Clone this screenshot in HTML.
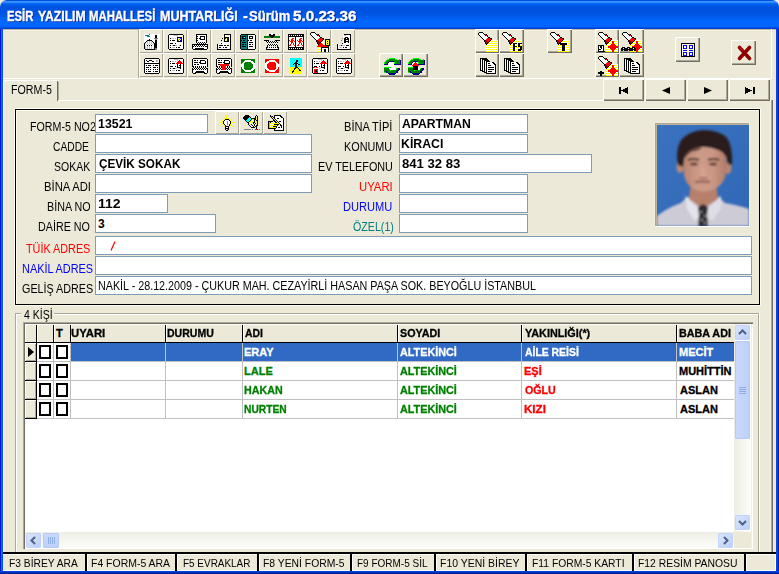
<!DOCTYPE html><html><head><meta charset="utf-8"><style>
html,body{margin:0;padding:0;}
body{width:779px;height:574px;position:relative;overflow:hidden;background:#ECE9D8;font-family:"Liberation Sans", sans-serif;font-size:11px;color:#000;}
svg text{font-family:"Liberation Sans", sans-serif;}
.inp{position:absolute;background:#fff;box-shadow:inset 0 0 0 1px #7F9DB9;}
</style></head><body>
<div style="position:absolute;left:0px;top:0px;width:779px;height:29px;background:linear-gradient(#0050DD 0px,#0050DD 1px,#3D95FF 1px,#3D95FF 2px,#2A86FF 2px,#2A86FF 3px,#0A6AF8 3px,#0A6AF8 4px,#0060EE 4px,#0060EE 5px,#0058E6 5px,#0058E6 6px,#0054E0 6px,#0054E0 7px,#0053DF 7px,#0053DF 8px,#0053DF 8px,#0053DF 9px,#0053DF 9px,#0053DF 10px,#0053DF 10px,#0053DF 11px,#0053DF 11px,#0053DF 12px,#0054E0 12px,#0054E0 13px,#0055E2 13px,#0055E2 14px,#0056E4 14px,#0056E4 15px,#0058E7 15px,#0058E7 16px,#005AEA 16px,#005AEA 17px,#005DEF 17px,#005DEF 18px,#0060F4 18px,#0060F4 19px,#0063F8 19px,#0063F8 20px,#0066FF 20px,#0066FF 21px,#0066FF 21px,#0066FF 22px,#0066FF 22px,#0066FF 23px,#0066FF 23px,#0066FF 24px,#0066FF 24px,#0066FF 25px,#0066FF 25px,#0066FF 26px,#0064FC 26px,#0064FC 27px,#0050E8 27px,#0050E8 28px,#0040D0 28px,#0040D0 29px);border-radius:7px 7px 0 0;"></div>
<div style="position:absolute;left:3px;top:29px;width:773px;height:1px;background:#BFB8A0"></div>
<div style="position:absolute;left:3px;top:30px;width:773px;height:1px;background:#F2EFE2"></div>
<div style="position:absolute;left:0px;top:29px;width:3px;height:545px;background:linear-gradient(90deg,#0019CF 0,#0019CF 1px,#166AEE 1px,#166AEE 2px,#0055EA 2px)"></div>
<div style="position:absolute;left:776px;top:29px;width:3px;height:545px;background:linear-gradient(90deg,#0844E6 0,#0844E6 1px,#0B41C8 1px,#0B41C8 2px,#001EA0 2px)"></div>
<div style="position:absolute;left:0px;top:571px;width:779px;height:3px;background:linear-gradient(#0044D8 0,#0044D8 1px,#0030BB 1px,#0030BB 2px,#001B9C 2px)"></div>
<div style="position:absolute;left:3px;top:78px;width:769px;height:1px;background:#fff"></div>
<div style="position:absolute;left:771px;top:29px;width:1px;height:50px;background:#fff"></div>
<div style="position:absolute;left:138px;top:29px;width:1px;height:49px;background:#ACA899"></div>
<div style="position:absolute;left:139px;top:29px;width:24px;height:24px;background:#ECE9D8;box-shadow:inset 1px 1px 0 #fff, inset -1px -1px 0 #ACA899;"><svg style="position:absolute;left:0px;top:0px" width="24" height="24" viewBox="0 0 24 24" shape-rendering="crispEdges"><path d="M5 5h5v1h-5zM11 5h10v1h-10zM5 6h1v1h-1zM10 6h6v1h-6zM18 6h3v1h-3zM5 7h3v1h-3zM11 7h5v1h-5zM18 7h3v1h-3zM5 8h11v1h-11zM18 8h3v1h-3zM5 9h10v1h-10zM19 9h2v1h-2zM5 10h5v1h-5zM11 10h5v1h-5zM18 10h3v1h-3zM5 11h3v1h-3zM13 11h3v1h-3zM18 11h3v1h-3zM5 12h2v1h-2zM9 12h1v1h-1zM11 12h1v1h-1zM14 12h2v1h-2zM18 12h3v1h-3zM5 13h1v1h-1zM7 13h1v1h-1zM9 13h1v1h-1zM11 13h1v1h-1zM13 13h1v1h-1zM15 13h1v1h-1zM18 13h3v1h-3zM7 14h1v1h-1zM9 14h1v1h-1zM11 14h1v1h-1zM13 14h1v1h-1zM18 14h3v1h-3zM6 15h1v1h-1zM8 15h1v1h-1zM10 15h1v1h-1zM12 15h1v1h-1zM14 15h1v1h-1zM18 15h3v1h-3zM6 16h2v1h-2zM9 16h1v1h-1zM11 16h1v1h-1zM13 16h2v1h-2zM18 16h3v1h-3zM7 17h1v1h-1zM9 17h1v1h-1zM11 17h1v1h-1zM13 17h2v1h-2zM18 17h3v1h-3zM7 18h1v1h-1zM9 18h1v1h-1zM11 18h1v1h-1zM13 18h2v1h-2zM18 18h3v1h-3zM7 19h1v1h-1zM9 19h1v1h-1zM11 19h1v1h-1zM13 19h2v1h-2zM18 19h3v1h-3zM5 20h1v1h-1zM18 20h3v1h-3z" fill="#fff"/><path d="M10 5h1v1h-1zM6 6h4v1h-4zM8 7h3v1h-3z" fill="#008080"/><path d="M16 6h2v1h-2zM16 7h2v1h-2zM16 8h2v1h-2zM10 10h1v1h-1zM8 11h5v1h-5zM16 11h2v1h-2zM7 12h1v1h-1zM13 12h1v1h-1zM16 12h2v1h-2zM6 13h1v1h-1zM14 13h1v1h-1zM16 13h2v1h-2zM5 14h1v1h-1zM15 14h3v1h-3zM5 15h1v1h-1zM15 15h3v1h-3zM5 16h1v1h-1zM8 16h1v1h-1zM10 16h1v1h-1zM12 16h1v1h-1zM15 16h3v1h-3zM5 17h1v1h-1zM15 17h3v1h-3zM5 18h1v1h-1zM15 18h3v1h-3zM5 19h1v1h-1zM15 19h1v1h-1zM6 20h10v1h-10z" fill="#000"/><path d="M15 9h4v1h-4zM16 10h2v1h-2zM16 19h2v1h-2zM16 20h2v1h-2z" fill="#808080"/><path d="M8 12h1v1h-1zM10 12h1v1h-1zM12 12h1v1h-1zM8 13h1v1h-1zM10 13h1v1h-1zM12 13h1v1h-1zM6 14h1v1h-1zM8 14h1v1h-1zM10 14h1v1h-1zM12 14h1v1h-1zM14 14h1v1h-1zM7 15h1v1h-1zM9 15h1v1h-1zM11 15h1v1h-1zM13 15h1v1h-1zM6 17h1v1h-1zM8 17h1v1h-1zM10 17h1v1h-1zM12 17h1v1h-1zM6 18h1v1h-1zM8 18h1v1h-1zM10 18h1v1h-1zM12 18h1v1h-1zM6 19h1v1h-1zM8 19h1v1h-1zM10 19h1v1h-1zM12 19h1v1h-1z" fill="#C0C0C0"/></svg></div>
<div style="position:absolute;left:163px;top:29px;width:24px;height:24px;background:#ECE9D8;box-shadow:inset 1px 1px 0 #fff, inset -1px -1px 0 #ACA899;"><svg style="position:absolute;left:0px;top:0px" width="24" height="24" viewBox="0 0 24 24" shape-rendering="crispEdges"><path d="M6 5h14v1h-14zM5 6h1v1h-1zM20 6h1v1h-1zM5 7h1v1h-1zM20 7h1v1h-1zM5 8h1v1h-1zM14 8h5v1h-5zM20 8h1v1h-1zM5 9h1v1h-1zM7 9h1v1h-1zM14 9h1v1h-1zM18 9h1v1h-1zM20 9h1v1h-1zM5 10h1v1h-1zM14 10h1v1h-1zM18 10h1v1h-1zM20 10h1v1h-1zM5 11h1v1h-1zM7 11h1v1h-1zM9 11h3v1h-3zM14 11h1v1h-1zM18 11h1v1h-1zM20 11h1v1h-1zM5 12h1v1h-1zM14 12h5v1h-5zM20 12h1v1h-1zM5 13h1v1h-1zM20 13h1v1h-1zM5 14h1v1h-1zM7 14h3v1h-3zM12 14h1v1h-1zM20 14h1v1h-1zM5 15h1v1h-1zM20 15h1v1h-1zM5 16h1v1h-1zM7 16h1v1h-1zM10 16h2v1h-2zM17 16h1v1h-1zM20 16h1v1h-1zM5 17h1v1h-1zM20 17h1v1h-1zM5 18h1v1h-1zM7 18h1v1h-1zM13 18h1v1h-1zM15 18h2v1h-2zM20 18h1v1h-1zM5 19h1v1h-1zM20 19h1v1h-1zM6 20h14v1h-14z" fill="#000"/><path d="M6 6h5v1h-5zM15 6h5v1h-5zM6 7h8v1h-8zM15 7h5v1h-5zM6 8h8v1h-8zM19 8h1v1h-1zM6 9h1v1h-1zM8 9h1v1h-1zM11 9h1v1h-1zM13 9h1v1h-1zM15 9h1v1h-1zM19 9h1v1h-1zM6 10h8v1h-8zM17 10h1v1h-1zM19 10h1v1h-1zM6 11h1v1h-1zM8 11h1v1h-1zM12 11h2v1h-2zM16 11h1v1h-1zM19 11h1v1h-1zM6 12h8v1h-8zM19 12h1v1h-1zM6 13h14v1h-14zM6 14h1v1h-1zM10 14h2v1h-2zM13 14h7v1h-7zM6 15h14v1h-14zM6 16h1v1h-1zM8 16h1v1h-1zM14 16h2v1h-2zM18 16h2v1h-2zM6 17h14v1h-14zM6 18h1v1h-1zM8 18h1v1h-1zM12 18h1v1h-1zM14 18h1v1h-1zM17 18h3v1h-3zM6 19h14v1h-14z" fill="#fff"/><path d="M11 6h4v1h-4zM14 7h1v1h-1zM9 9h2v1h-2zM12 9h1v1h-1zM9 16h1v1h-1zM12 16h2v1h-2zM16 16h1v1h-1zM9 18h3v1h-3z" fill="#C0C0C0"/><path d="M16 9h1v1h-1zM15 10h1v1h-1z" fill="#FFFF00"/><path d="M17 9h1v1h-1zM17 11h1v1h-1z" fill="#0000FF"/><path d="M16 10h1v1h-1zM15 11h1v1h-1z" fill="#808000"/></svg></div>
<div style="position:absolute;left:187px;top:29px;width:24px;height:24px;background:#ECE9D8;box-shadow:inset 1px 1px 0 #fff, inset -1px -1px 0 #ACA899;"><svg style="position:absolute;left:0px;top:0px" width="24" height="24" viewBox="0 0 24 24" shape-rendering="crispEdges"><path d="M9 5h11v1h-11zM9 6h1v1h-1zM19 6h1v1h-1zM9 7h2v1h-2zM13 7h5v1h-5zM19 7h1v1h-1zM9 8h1v1h-1zM13 8h1v1h-1zM17 8h1v1h-1zM19 8h1v1h-1zM9 9h2v1h-2zM12 9h2v1h-2zM17 9h1v1h-1zM19 9h1v1h-1zM9 10h1v1h-1zM13 10h5v1h-5zM19 10h1v1h-1zM9 11h2v1h-2zM19 11h1v1h-1zM9 12h1v1h-1zM19 12h1v1h-1zM9 13h1v1h-1zM11 13h1v1h-1zM13 13h1v1h-1zM15 13h1v1h-1zM17 13h1v1h-1zM19 13h1v1h-1zM10 14h1v1h-1zM12 14h1v1h-1zM14 14h1v1h-1zM16 14h1v1h-1zM18 14h1v1h-1zM5 15h16v1h-16zM5 16h1v1h-1zM7 16h1v1h-1zM9 16h1v1h-1zM11 16h1v1h-1zM13 16h1v1h-1zM15 16h1v1h-1zM17 16h1v1h-1zM20 16h1v1h-1zM5 17h2v1h-2zM8 17h1v1h-1zM10 17h1v1h-1zM12 17h1v1h-1zM14 17h1v1h-1zM16 17h1v1h-1zM18 17h3v1h-3zM5 18h1v1h-1zM20 18h1v1h-1zM5 19h1v1h-1zM8 19h9v1h-9zM20 19h1v1h-1zM6 20h14v1h-14z" fill="#000"/><path d="M10 6h9v1h-9zM11 7h2v1h-2zM18 7h1v1h-1zM10 8h3v1h-3zM14 8h3v1h-3zM18 8h1v1h-1zM11 9h1v1h-1zM14 9h3v1h-3zM18 9h1v1h-1zM10 10h3v1h-3zM18 10h1v1h-1zM11 11h8v1h-8zM10 12h9v1h-9zM10 13h1v1h-1zM12 13h1v1h-1zM14 13h1v1h-1zM16 13h1v1h-1zM18 13h1v1h-1zM11 14h1v1h-1zM13 14h1v1h-1zM15 14h1v1h-1zM17 14h1v1h-1zM6 16h1v1h-1zM8 16h1v1h-1zM10 16h1v1h-1zM12 16h1v1h-1zM14 16h1v1h-1zM16 16h1v1h-1zM18 16h2v1h-2zM7 17h1v1h-1zM9 17h1v1h-1zM11 17h1v1h-1zM13 17h1v1h-1zM15 17h1v1h-1zM17 17h1v1h-1zM6 18h14v1h-14zM6 19h2v1h-2zM17 19h3v1h-3z" fill="#fff"/></svg></div>
<div style="position:absolute;left:211px;top:29px;width:24px;height:24px;background:#ECE9D8;box-shadow:inset 1px 1px 0 #fff, inset -1px -1px 0 #ACA899;"><svg style="position:absolute;left:0px;top:0px" width="24" height="24" viewBox="0 0 24 24" shape-rendering="crispEdges"><path d="M13 5h7v1h-7zM13 6h1v1h-1zM19 6h1v1h-1zM13 7h1v1h-1zM19 7h1v1h-1zM13 8h5v1h-5zM19 8h1v1h-1zM11 9h1v1h-1zM13 9h1v1h-1zM17 9h1v1h-1zM19 9h1v1h-1zM13 10h1v1h-1zM17 10h1v1h-1zM19 10h1v1h-1zM10 11h1v1h-1zM13 11h1v1h-1zM17 11h1v1h-1zM19 11h1v1h-1zM13 12h5v1h-5zM19 12h1v1h-1zM19 13h1v1h-1zM10 14h1v1h-1zM19 14h1v1h-1zM6 15h1v1h-1zM19 15h1v1h-1zM6 16h1v1h-1zM8 16h4v1h-4zM13 16h2v1h-2zM16 16h2v1h-2zM19 16h1v1h-1zM6 17h1v1h-1zM19 17h1v1h-1zM6 18h1v1h-1zM8 18h2v1h-2zM12 18h1v1h-1zM14 18h2v1h-2zM19 18h1v1h-1zM6 19h1v1h-1zM19 19h1v1h-1zM6 20h14v1h-14z" fill="#000"/><path d="M14 6h5v1h-5zM12 7h1v1h-1zM14 7h5v1h-5zM18 8h1v1h-1zM18 9h1v1h-1zM15 10h1v1h-1zM18 10h1v1h-1zM14 11h1v1h-1zM18 11h1v1h-1zM18 12h1v1h-1zM9 13h10v1h-10zM11 14h8v1h-8zM7 15h12v1h-12zM7 16h1v1h-1zM12 16h1v1h-1zM15 16h1v1h-1zM18 16h1v1h-1zM7 17h12v1h-12zM7 18h1v1h-1zM10 18h2v1h-2zM13 18h1v1h-1zM16 18h3v1h-3zM7 19h12v1h-12z" fill="#fff"/><path d="M14 9h1v1h-1zM16 9h1v1h-1zM16 10h1v1h-1zM16 11h1v1h-1z" fill="#0000FF"/><path d="M15 9h1v1h-1zM14 10h1v1h-1zM15 11h1v1h-1z" fill="#FFFF00"/></svg></div>
<div style="position:absolute;left:235px;top:29px;width:24px;height:24px;background:#ECE9D8;box-shadow:inset 1px 1px 0 #fff, inset -1px -1px 0 #ACA899;"><svg style="position:absolute;left:0px;top:0px" width="24" height="24" viewBox="0 0 24 24" shape-rendering="crispEdges"><path d="M6 5h14v1h-14zM5 6h1v1h-1zM12 6h1v1h-1zM20 6h1v1h-1zM5 7h1v1h-1zM7 7h4v1h-4zM12 7h1v1h-1zM14 7h4v1h-4zM20 7h1v1h-1zM5 8h1v1h-1zM7 8h1v1h-1zM10 8h1v1h-1zM12 8h1v1h-1zM14 8h1v1h-1zM17 8h1v1h-1zM20 8h1v1h-1zM5 9h1v1h-1zM7 9h4v1h-4zM12 9h1v1h-1zM14 9h4v1h-4zM20 9h1v1h-1zM5 10h1v1h-1zM12 10h1v1h-1zM20 10h1v1h-1zM5 11h2v1h-2zM8 11h2v1h-2zM12 11h2v1h-2zM15 11h2v1h-2zM20 11h1v1h-1zM5 12h1v1h-1zM12 12h1v1h-1zM20 12h1v1h-1zM5 13h1v1h-1zM7 13h4v1h-4zM12 13h1v1h-1zM14 13h4v1h-4zM20 13h1v1h-1zM5 14h1v1h-1zM12 14h1v1h-1zM20 14h1v1h-1zM5 15h1v1h-1zM7 15h2v1h-2zM10 15h1v1h-1zM12 15h1v1h-1zM14 15h2v1h-2zM17 15h1v1h-1zM20 15h1v1h-1zM5 16h1v1h-1zM12 16h1v1h-1zM20 16h1v1h-1zM5 17h1v1h-1zM7 17h4v1h-4zM12 17h1v1h-1zM14 17h4v1h-4zM20 17h1v1h-1zM5 18h1v1h-1zM12 18h1v1h-1zM20 18h1v1h-1zM5 19h1v1h-1zM12 19h1v1h-1zM20 19h1v1h-1zM6 20h14v1h-14z" fill="#000"/><path d="M6 6h6v1h-6zM6 7h1v1h-1zM11 7h1v1h-1zM6 8h1v1h-1zM8 8h1v1h-1zM11 8h1v1h-1zM6 9h1v1h-1zM11 9h1v1h-1zM6 10h6v1h-6zM7 11h1v1h-1zM10 11h2v1h-2zM6 12h6v1h-6zM6 13h1v1h-1zM11 13h1v1h-1zM6 14h6v1h-6zM6 15h1v1h-1zM9 15h1v1h-1zM11 15h1v1h-1zM6 16h6v1h-6zM6 17h1v1h-1zM11 17h1v1h-1zM6 18h6v1h-6zM6 19h6v1h-6z" fill="#008080"/><path d="M13 6h7v1h-7zM13 7h1v1h-1zM18 7h2v1h-2zM13 8h1v1h-1zM15 8h2v1h-2zM18 8h2v1h-2zM13 9h1v1h-1zM18 9h2v1h-2zM13 10h7v1h-7zM14 11h1v1h-1zM17 11h3v1h-3zM13 12h7v1h-7zM13 13h1v1h-1zM18 13h2v1h-2zM13 14h7v1h-7zM13 15h1v1h-1zM16 15h1v1h-1zM18 15h2v1h-2zM13 16h7v1h-7zM13 17h1v1h-1zM18 17h2v1h-2zM13 18h7v1h-7zM13 19h7v1h-7z" fill="#fff"/><path d="M9 8h1v1h-1z" fill="#00FFFF"/></svg></div>
<div style="position:absolute;left:259px;top:29px;width:24px;height:24px;background:#ECE9D8;box-shadow:inset 1px 1px 0 #fff, inset -1px -1px 0 #ACA899;"><svg style="position:absolute;left:0px;top:0px" width="24" height="24" viewBox="0 0 24 24" shape-rendering="crispEdges"><path d="M10 5h2v1h-2zM14 5h2v1h-2zM10 6h6v1h-6zM11 7h4v1h-4zM12 8h2v1h-2zM5 11h5v1h-5zM16 11h5v1h-5zM7 12h1v1h-1zM9 12h1v1h-1zM11 12h1v1h-1zM13 12h1v1h-1zM15 12h1v1h-1zM17 12h1v1h-1zM8 13h1v1h-1zM10 13h1v1h-1zM12 13h1v1h-1zM14 13h1v1h-1zM16 13h1v1h-1zM18 13h1v1h-1zM9 15h1v1h-1zM11 15h1v1h-1zM13 15h1v1h-1zM15 15h1v1h-1zM17 15h1v1h-1zM8 16h1v1h-1zM10 16h1v1h-1zM12 16h1v1h-1zM14 16h1v1h-1zM16 16h1v1h-1zM18 16h1v1h-1zM8 17h1v1h-1zM18 17h1v1h-1zM7 18h2v1h-2zM10 18h1v1h-1zM12 18h1v1h-1zM14 18h1v1h-1zM16 18h1v1h-1zM18 18h2v1h-2zM7 19h1v1h-1zM19 19h1v1h-1zM7 20h13v1h-13z" fill="#000"/><path d="M12 5h2v1h-2zM8 12h1v1h-1zM10 12h1v1h-1zM12 12h1v1h-1zM14 12h1v1h-1zM16 12h1v1h-1zM18 12h1v1h-1zM10 15h1v1h-1zM12 15h1v1h-1zM14 15h1v1h-1zM16 15h1v1h-1zM9 16h1v1h-1zM11 16h1v1h-1zM13 16h1v1h-1zM15 16h1v1h-1zM17 16h1v1h-1zM9 18h1v1h-1zM11 18h1v1h-1zM13 18h1v1h-1zM15 18h1v1h-1zM17 18h1v1h-1zM8 19h11v1h-11z" fill="#fff"/><path d="M5 7h6v1h-6zM15 7h6v1h-6zM5 8h7v1h-7zM14 8h7v1h-7z" fill="#008000"/></svg></div>
<div style="position:absolute;left:283px;top:29px;width:24px;height:24px;background:#ECE9D8;box-shadow:inset 1px 1px 0 #fff, inset -1px -1px 0 #ACA899;"><svg style="position:absolute;left:0px;top:0px" width="24" height="24" viewBox="0 0 24 24" shape-rendering="crispEdges"><path d="M5 5h16v1h-16zM5 6h1v1h-1zM7 6h1v1h-1zM9 6h1v1h-1zM11 6h1v1h-1zM13 6h1v1h-1zM15 6h1v1h-1zM17 6h1v1h-1zM19 6h2v1h-2zM5 7h16v1h-16zM5 8h1v1h-1zM12 8h1v1h-1zM20 8h1v1h-1zM5 9h1v1h-1zM12 9h1v1h-1zM20 9h1v1h-1zM5 10h1v1h-1zM12 10h1v1h-1zM20 10h1v1h-1zM5 11h1v1h-1zM12 11h1v1h-1zM20 11h1v1h-1zM5 12h1v1h-1zM12 12h1v1h-1zM20 12h1v1h-1zM5 13h1v1h-1zM12 13h1v1h-1zM20 13h1v1h-1zM5 14h1v1h-1zM12 14h1v1h-1zM20 14h1v1h-1zM5 15h1v1h-1zM12 15h1v1h-1zM20 15h1v1h-1zM5 16h1v1h-1zM12 16h1v1h-1zM20 16h1v1h-1zM5 17h1v1h-1zM12 17h1v1h-1zM20 17h1v1h-1zM5 18h16v1h-16zM5 19h1v1h-1zM7 19h1v1h-1zM9 19h1v1h-1zM11 19h1v1h-1zM13 19h1v1h-1zM15 19h1v1h-1zM17 19h1v1h-1zM19 19h2v1h-2zM5 20h16v1h-16z" fill="#000"/><path d="M6 6h1v1h-1zM8 6h1v1h-1zM10 6h1v1h-1zM12 6h1v1h-1zM14 6h1v1h-1zM16 6h1v1h-1zM18 6h1v1h-1zM6 8h6v1h-6zM13 8h7v1h-7zM6 9h3v1h-3zM11 9h1v1h-1zM13 9h4v1h-4zM19 9h1v1h-1zM6 10h2v1h-2zM10 10h2v1h-2zM13 10h3v1h-3zM18 10h2v1h-2zM7 11h1v1h-1zM11 11h1v1h-1zM13 11h1v1h-1zM15 11h1v1h-1zM19 11h1v1h-1zM6 12h1v1h-1zM10 12h1v1h-1zM13 12h2v1h-2zM18 12h1v1h-1zM6 13h2v1h-2zM10 13h2v1h-2zM13 13h3v1h-3zM18 13h2v1h-2zM6 14h2v1h-2zM9 14h1v1h-1zM11 14h1v1h-1zM13 14h3v1h-3zM17 14h1v1h-1zM19 14h1v1h-1zM6 15h1v1h-1zM8 15h2v1h-2zM11 15h1v1h-1zM13 15h2v1h-2zM16 15h2v1h-2zM19 15h1v1h-1zM8 16h3v1h-3zM13 16h1v1h-1zM16 16h3v1h-3zM6 17h6v1h-6zM13 17h7v1h-7zM6 19h1v1h-1zM8 19h1v1h-1zM10 19h1v1h-1zM12 19h1v1h-1zM14 19h1v1h-1zM16 19h1v1h-1zM18 19h1v1h-1z" fill="#fff"/><path d="M9 9h2v1h-2zM17 9h2v1h-2zM8 10h2v1h-2zM16 10h2v1h-2zM6 11h1v1h-1zM8 11h3v1h-3zM14 11h1v1h-1zM16 11h3v1h-3zM7 12h3v1h-3zM11 12h1v1h-1zM15 12h3v1h-3zM19 12h1v1h-1zM8 13h2v1h-2zM16 13h2v1h-2zM8 14h1v1h-1zM10 14h1v1h-1zM16 14h1v1h-1zM18 14h1v1h-1zM7 15h1v1h-1zM10 15h1v1h-1zM15 15h1v1h-1zM18 15h1v1h-1zM6 16h2v1h-2zM11 16h1v1h-1zM14 16h2v1h-2zM19 16h1v1h-1z" fill="#FF0000"/></svg></div>
<div style="position:absolute;left:307px;top:29px;width:24px;height:24px;background:#ECE9D8;box-shadow:inset 1px 1px 0 #fff, inset -1px -1px 0 #ACA899;"><svg style="position:absolute;left:0px;top:0px" width="24" height="24" viewBox="0 0 24 24" shape-rendering="crispEdges"><path d="M4 3h4v1h-4zM3 4h1v1h-1zM8 4h1v1h-1zM3 5h1v1h-1zM9 5h1v1h-1zM11 5h1v1h-1zM4 6h1v1h-1zM10 6h1v1h-1zM12 6h1v1h-1zM5 7h1v1h-1zM12 7h1v1h-1zM6 8h1v1h-1zM13 8h2v1h-2zM7 9h1v1h-1zM15 9h2v1h-2zM8 10h1v1h-1zM16 10h1v1h-1zM18 10h5v1h-5zM9 11h1v1h-1zM15 11h1v1h-1zM18 11h1v1h-1zM22 11h1v1h-1zM9 12h1v1h-1zM14 12h1v1h-1zM18 12h1v1h-1zM20 12h1v1h-1zM22 12h1v1h-1zM10 13h1v1h-1zM13 13h1v1h-1zM18 13h1v1h-1zM22 13h1v1h-1zM10 14h1v1h-1zM12 14h1v1h-1zM18 14h1v1h-1zM20 14h1v1h-1zM22 14h1v1h-1zM11 15h1v1h-1zM18 15h1v1h-1zM22 15h1v1h-1zM18 16h5v1h-5zM21 17h1v1h-1zM14 18h8v1h-8zM14 19h1v1h-1zM21 19h1v1h-1zM14 20h1v1h-1zM17 20h2v1h-2zM21 20h1v1h-1zM14 21h1v1h-1zM17 21h2v1h-2zM21 21h1v1h-1zM14 22h1v1h-1zM17 22h2v1h-2zM21 22h1v1h-1z" fill="#000"/><path d="M4 4h4v1h-4zM4 5h5v1h-5zM5 6h5v1h-5zM6 7h6v1h-6zM7 8h6v1h-6zM8 9h4v1h-4zM9 10h2v1h-2zM14 13h1v1h-1zM12 18h1v1h-1zM11 19h3v1h-3zM15 19h6v1h-6zM12 20h1v1h-1zM15 20h2v1h-2zM19 20h2v1h-2zM11 21h3v1h-3zM15 21h2v1h-2zM19 21h2v1h-2zM12 22h1v1h-1zM15 22h2v1h-2zM19 22h2v1h-2z" fill="#fff"/><path d="M10 5h1v1h-1zM11 6h1v1h-1zM12 9h3v1h-3zM11 10h5v1h-5zM11 11h4v1h-4zM12 12h2v1h-2zM13 14h2v1h-2zM12 15h4v1h-4zM11 16h7v1h-7zM10 17h11v1h-11z" fill="#FF0000"/><path d="M10 11h1v1h-1zM10 12h2v1h-2zM11 13h2v1h-2zM11 14h1v1h-1z" fill="#800000"/><path d="M19 11h3v1h-3zM19 12h1v1h-1zM21 12h1v1h-1zM19 13h3v1h-3zM19 14h1v1h-1zM21 14h1v1h-1zM19 15h3v1h-3zM11 18h1v1h-1zM13 18h1v1h-1zM11 20h1v1h-1zM13 20h1v1h-1zM11 22h1v1h-1zM13 22h1v1h-1z" fill="#FFFF00"/></svg></div>
<div style="position:absolute;left:331px;top:29px;width:24px;height:24px;background:#ECE9D8;box-shadow:inset 1px 1px 0 #fff, inset -1px -1px 0 #ACA899;"><svg style="position:absolute;left:0px;top:0px" width="24" height="24" viewBox="0 0 24 24" shape-rendering="crispEdges"><path d="M13 5h7v1h-7zM19 6h1v1h-1zM19 7h1v1h-1zM14 8h3v1h-3zM19 8h1v1h-1zM13 9h2v1h-2zM16 9h2v1h-2zM19 9h1v1h-1zM13 10h5v1h-5zM19 10h1v1h-1zM13 11h2v1h-2zM17 11h1v1h-1zM19 11h1v1h-1zM13 12h5v1h-5zM19 12h1v1h-1zM13 13h2v1h-2zM17 13h1v1h-1zM19 13h1v1h-1zM11 14h1v1h-1zM19 14h1v1h-1zM6 15h1v1h-1zM19 15h1v1h-1zM6 16h1v1h-1zM10 16h1v1h-1zM15 16h3v1h-3zM19 16h1v1h-1zM6 17h1v1h-1zM19 17h1v1h-1zM6 18h1v1h-1zM12 18h1v1h-1zM14 18h2v1h-2zM19 18h1v1h-1zM6 19h1v1h-1zM19 19h1v1h-1zM6 20h14v1h-14z" fill="#000"/><path d="M12 6h1v1h-1zM15 6h4v1h-4zM12 7h7v1h-7zM12 8h2v1h-2zM17 8h2v1h-2zM12 9h1v1h-1zM15 9h1v1h-1zM18 9h1v1h-1zM12 10h1v1h-1zM18 10h1v1h-1zM12 11h1v1h-1zM15 11h2v1h-2zM18 11h1v1h-1zM12 12h1v1h-1zM18 12h1v1h-1zM12 13h1v1h-1zM15 13h2v1h-2zM18 13h1v1h-1zM12 14h7v1h-7zM7 15h12v1h-12zM7 16h1v1h-1zM14 16h1v1h-1zM18 16h1v1h-1zM7 17h12v1h-12zM7 18h1v1h-1zM11 18h1v1h-1zM13 18h1v1h-1zM16 18h3v1h-3zM7 19h12v1h-12z" fill="#fff"/><path d="M13 6h2v1h-2zM8 16h2v1h-2zM11 16h3v1h-3zM8 18h3v1h-3z" fill="#C0C0C0"/><path d="M11 9h1v1h-1zM10 11h1v1h-1z" fill="#808080"/></svg></div>
<div style="position:absolute;left:139px;top:53px;width:24px;height:24px;background:#ECE9D8;box-shadow:inset 1px 1px 0 #fff, inset -1px -1px 0 #ACA899;"><svg style="position:absolute;left:0px;top:0px" width="24" height="24" viewBox="0 0 24 24" shape-rendering="crispEdges"><path d="M6 5h14v1h-14zM5 6h1v1h-1zM20 6h1v1h-1zM5 7h1v1h-1zM7 7h1v1h-1zM10 7h3v1h-3zM20 7h1v1h-1zM5 8h1v1h-1zM8 8h2v1h-2zM13 8h2v1h-2zM20 8h1v1h-1zM5 9h1v1h-1zM20 9h1v1h-1zM5 10h16v1h-16zM5 11h1v1h-1zM20 11h1v1h-1zM5 12h1v1h-1zM7 12h1v1h-1zM9 12h3v1h-3zM14 12h1v1h-1zM16 12h3v1h-3zM20 12h1v1h-1zM5 13h1v1h-1zM20 13h1v1h-1zM5 14h1v1h-1zM7 14h3v1h-3zM11 14h1v1h-1zM14 14h3v1h-3zM18 14h1v1h-1zM20 14h1v1h-1zM5 15h1v1h-1zM20 15h1v1h-1zM5 16h1v1h-1zM7 16h1v1h-1zM9 16h1v1h-1zM11 16h1v1h-1zM14 16h1v1h-1zM16 16h1v1h-1zM18 16h1v1h-1zM20 16h1v1h-1zM5 17h1v1h-1zM20 17h1v1h-1zM5 18h1v1h-1zM7 18h1v1h-1zM9 18h3v1h-3zM14 18h1v1h-1zM16 18h3v1h-3zM20 18h1v1h-1zM5 19h1v1h-1zM20 19h1v1h-1zM6 20h14v1h-14z" fill="#000"/><path d="M6 6h14v1h-14zM6 7h1v1h-1zM8 7h2v1h-2zM13 7h4v1h-4zM19 7h1v1h-1zM6 8h2v1h-2zM10 8h3v1h-3zM15 8h2v1h-2zM19 8h1v1h-1zM6 9h14v1h-14zM6 11h14v1h-14zM6 12h1v1h-1zM8 12h1v1h-1zM12 12h2v1h-2zM15 12h1v1h-1zM19 12h1v1h-1zM6 13h14v1h-14zM6 14h1v1h-1zM10 14h1v1h-1zM12 14h2v1h-2zM17 14h1v1h-1zM19 14h1v1h-1zM6 15h14v1h-14zM6 16h1v1h-1zM8 16h1v1h-1zM10 16h1v1h-1zM12 16h2v1h-2zM15 16h1v1h-1zM17 16h1v1h-1zM19 16h1v1h-1zM6 17h14v1h-14zM6 18h1v1h-1zM8 18h1v1h-1zM12 18h2v1h-2zM15 18h1v1h-1zM19 18h1v1h-1zM6 19h14v1h-14z" fill="#fff"/><path d="M17 7h1v1h-1z" fill="#808080"/><path d="M18 7h1v1h-1zM17 8h2v1h-2z" fill="#C0C0C0"/></svg></div>
<div style="position:absolute;left:163px;top:53px;width:24px;height:24px;background:#ECE9D8;box-shadow:inset 1px 1px 0 #fff, inset -1px -1px 0 #ACA899;"><svg style="position:absolute;left:0px;top:0px" width="24" height="24" viewBox="0 0 24 24" shape-rendering="crispEdges"><path d="M6 5h14v1h-14zM5 6h1v1h-1zM20 6h1v1h-1zM5 7h1v1h-1zM20 7h1v1h-1zM5 8h1v1h-1zM7 8h1v1h-1zM20 8h1v1h-1zM5 9h1v1h-1zM20 9h1v1h-1zM5 10h1v1h-1zM7 10h1v1h-1zM9 10h3v1h-3zM20 10h1v1h-1zM5 11h1v1h-1zM14 11h1v1h-1zM17 11h1v1h-1zM20 11h1v1h-1zM5 12h1v1h-1zM14 12h1v1h-1zM16 12h2v1h-2zM20 12h1v1h-1zM5 13h1v1h-1zM7 13h3v1h-3zM12 13h1v1h-1zM14 13h1v1h-1zM17 13h1v1h-1zM20 13h1v1h-1zM5 14h1v1h-1zM14 14h4v1h-4zM20 14h1v1h-1zM5 15h1v1h-1zM7 15h1v1h-1zM10 15h2v1h-2zM17 15h1v1h-1zM20 15h1v1h-1zM5 16h1v1h-1zM20 16h1v1h-1zM5 17h1v1h-1zM7 17h1v1h-1zM13 17h1v1h-1zM15 17h2v1h-2zM20 17h1v1h-1zM5 18h1v1h-1zM20 18h1v1h-1zM5 19h1v1h-1zM20 19h1v1h-1zM6 20h14v1h-14z" fill="#000"/><path d="M6 6h5v1h-5zM15 6h5v1h-5zM6 7h8v1h-8zM15 7h1v1h-1zM17 7h3v1h-3zM6 8h1v1h-1zM8 8h1v1h-1zM11 8h1v1h-1zM13 8h2v1h-2zM18 8h2v1h-2zM6 9h8v1h-8zM19 9h1v1h-1zM6 10h1v1h-1zM8 10h1v1h-1zM12 10h1v1h-1zM6 11h8v1h-8zM15 11h2v1h-2zM18 11h2v1h-2zM6 12h8v1h-8zM15 12h1v1h-1zM18 12h2v1h-2zM6 13h1v1h-1zM10 13h2v1h-2zM13 13h1v1h-1zM15 13h2v1h-2zM18 13h2v1h-2zM6 14h8v1h-8zM18 14h2v1h-2zM6 15h1v1h-1zM8 15h1v1h-1zM14 15h2v1h-2zM18 15h2v1h-2zM6 16h14v1h-14zM6 17h1v1h-1zM8 17h1v1h-1zM12 17h1v1h-1zM14 17h1v1h-1zM17 17h3v1h-3zM6 18h14v1h-14zM6 19h14v1h-14z" fill="#fff"/><path d="M11 6h4v1h-4zM14 7h1v1h-1zM9 8h2v1h-2zM12 8h1v1h-1zM9 15h1v1h-1zM12 15h2v1h-2zM16 15h1v1h-1zM9 17h3v1h-3z" fill="#C0C0C0"/><path d="M16 7h1v1h-1zM15 8h3v1h-3zM14 9h5v1h-5zM13 10h7v1h-7z" fill="#FF0000"/></svg></div>
<div style="position:absolute;left:187px;top:53px;width:24px;height:24px;background:#ECE9D8;box-shadow:inset 1px 1px 0 #fff, inset -1px -1px 0 #ACA899;"><svg style="position:absolute;left:0px;top:0px" width="24" height="24" viewBox="0 0 24 24" shape-rendering="crispEdges"><path d="M6 5h14v1h-14zM5 6h1v1h-1zM20 6h1v1h-1zM5 7h1v1h-1zM7 7h2v1h-2zM10 7h1v1h-1zM13 7h5v1h-5zM20 7h1v1h-1zM5 8h1v1h-1zM13 8h1v1h-1zM18 8h1v1h-1zM20 8h1v1h-1zM5 9h1v1h-1zM7 9h4v1h-4zM12 9h2v1h-2zM18 9h1v1h-1zM20 9h1v1h-1zM5 10h1v1h-1zM13 10h6v1h-6zM20 10h1v1h-1zM5 11h1v1h-1zM7 11h2v1h-2zM10 11h2v1h-2zM20 11h1v1h-1zM5 12h1v1h-1zM20 12h1v1h-1zM5 13h2v1h-2zM8 13h1v1h-1zM10 13h1v1h-1zM12 13h1v1h-1zM14 13h1v1h-1zM16 13h1v1h-1zM18 13h1v1h-1zM20 13h1v1h-1zM6 14h1v1h-1zM8 14h1v1h-1zM10 14h1v1h-1zM12 14h1v1h-1zM14 14h1v1h-1zM16 14h1v1h-1zM18 14h1v1h-1zM5 15h1v1h-1zM7 15h1v1h-1zM9 15h1v1h-1zM11 15h1v1h-1zM13 15h1v1h-1zM15 15h1v1h-1zM17 15h1v1h-1zM19 15h2v1h-2zM5 16h2v1h-2zM8 16h1v1h-1zM10 16h1v1h-1zM12 16h1v1h-1zM14 16h1v1h-1zM16 16h1v1h-1zM18 16h1v1h-1zM20 16h1v1h-1zM5 17h1v1h-1zM20 17h1v1h-1zM5 18h1v1h-1zM9 18h8v1h-8zM20 18h1v1h-1zM5 19h1v1h-1zM8 19h10v1h-10zM20 19h1v1h-1zM6 20h3v1h-3zM17 20h3v1h-3z" fill="#000"/><path d="M6 6h14v1h-14zM6 7h1v1h-1zM9 7h1v1h-1zM11 7h2v1h-2zM18 7h2v1h-2zM6 8h7v1h-7zM14 8h4v1h-4zM19 8h1v1h-1zM6 9h1v1h-1zM11 9h1v1h-1zM14 9h4v1h-4zM19 9h1v1h-1zM6 10h7v1h-7zM19 10h1v1h-1zM6 11h1v1h-1zM9 11h1v1h-1zM12 11h8v1h-8zM6 12h14v1h-14zM7 13h1v1h-1zM9 13h1v1h-1zM11 13h1v1h-1zM13 13h1v1h-1zM15 13h1v1h-1zM17 13h1v1h-1zM19 13h1v1h-1zM6 15h1v1h-1zM8 15h1v1h-1zM10 15h1v1h-1zM12 15h1v1h-1zM14 15h1v1h-1zM16 15h1v1h-1zM18 15h1v1h-1zM7 16h1v1h-1zM9 16h1v1h-1zM11 16h1v1h-1zM13 16h1v1h-1zM15 16h1v1h-1zM17 16h1v1h-1zM19 16h1v1h-1zM6 17h14v1h-14zM6 18h3v1h-3zM17 18h3v1h-3zM6 19h2v1h-2zM18 19h2v1h-2z" fill="#fff"/></svg></div>
<div style="position:absolute;left:211px;top:53px;width:24px;height:24px;background:#ECE9D8;box-shadow:inset 1px 1px 0 #fff, inset -1px -1px 0 #ACA899;"><svg style="position:absolute;left:0px;top:0px" width="24" height="24" viewBox="0 0 24 24" shape-rendering="crispEdges"><path d="M6 5h14v1h-14zM5 6h1v1h-1zM20 6h1v1h-1zM5 7h1v1h-1zM7 7h2v1h-2zM10 7h1v1h-1zM13 7h5v1h-5zM20 7h1v1h-1zM5 8h1v1h-1zM13 8h1v1h-1zM18 8h1v1h-1zM20 8h1v1h-1zM5 9h1v1h-1zM7 9h4v1h-4zM12 9h2v1h-2zM18 9h1v1h-1zM20 9h1v1h-1zM5 10h1v1h-1zM13 10h6v1h-6zM20 10h1v1h-1zM5 11h1v1h-1zM7 11h2v1h-2zM20 11h1v1h-1zM5 12h1v1h-1zM20 12h1v1h-1zM5 13h2v1h-2zM8 13h1v1h-1zM10 13h1v1h-1zM16 13h1v1h-1zM18 13h1v1h-1zM20 13h1v1h-1zM6 14h1v1h-1zM8 14h1v1h-1zM10 14h1v1h-1zM16 14h1v1h-1zM18 14h1v1h-1zM5 15h1v1h-1zM7 15h1v1h-1zM9 15h1v1h-1zM15 15h1v1h-1zM17 15h1v1h-1zM19 15h2v1h-2zM5 16h2v1h-2zM8 16h1v1h-1zM10 16h1v1h-1zM16 16h1v1h-1zM18 16h1v1h-1zM20 16h1v1h-1zM5 17h1v1h-1zM20 17h1v1h-1zM5 18h1v1h-1zM9 18h8v1h-8zM20 18h1v1h-1zM5 19h1v1h-1zM8 19h10v1h-10zM20 19h1v1h-1zM6 20h3v1h-3zM17 20h3v1h-3z" fill="#000"/><path d="M6 6h14v1h-14zM6 7h1v1h-1zM9 7h1v1h-1zM11 7h2v1h-2zM18 7h2v1h-2zM6 8h7v1h-7zM14 8h4v1h-4zM19 8h1v1h-1zM6 9h1v1h-1zM11 9h1v1h-1zM14 9h4v1h-4zM19 9h1v1h-1zM6 10h7v1h-7zM19 10h1v1h-1zM6 11h1v1h-1zM18 11h2v1h-2zM6 12h3v1h-3zM18 12h2v1h-2zM7 13h1v1h-1zM9 13h1v1h-1zM15 13h1v1h-1zM17 13h1v1h-1zM19 13h1v1h-1zM6 15h1v1h-1zM8 15h1v1h-1zM10 15h1v1h-1zM16 15h1v1h-1zM18 15h1v1h-1zM7 16h1v1h-1zM9 16h1v1h-1zM15 16h1v1h-1zM17 16h1v1h-1zM19 16h1v1h-1zM6 17h14v1h-14zM6 18h3v1h-3zM17 18h3v1h-3zM6 19h2v1h-2zM18 19h2v1h-2z" fill="#fff"/><path d="M9 11h9v1h-9zM9 12h9v1h-9zM11 13h4v1h-4zM11 14h4v1h-4zM11 15h4v1h-4zM11 16h4v1h-4z" fill="#FF0000"/></svg></div>
<div style="position:absolute;left:235px;top:53px;width:24px;height:24px;background:#ECE9D8;box-shadow:inset 1px 1px 0 #fff, inset -1px -1px 0 #ACA899;"><svg style="position:absolute;left:0px;top:0px" width="24" height="24" viewBox="0 0 24 24" shape-rendering="crispEdges"><path d="M6 6h14v1h-14zM6 7h4v1h-4zM16 7h4v1h-4zM6 8h3v1h-3zM18 8h2v1h-2zM6 9h2v1h-2zM10 9h6v1h-6zM19 9h1v1h-1zM6 10h1v1h-1zM9 10h8v1h-8zM9 11h9v1h-9zM9 12h9v1h-9zM9 13h9v1h-9zM6 14h1v1h-1zM9 14h9v1h-9zM6 15h1v1h-1zM9 15h8v1h-8zM6 16h2v1h-2zM10 16h6v1h-6zM19 16h1v1h-1zM6 17h3v1h-3zM18 17h2v1h-2zM6 18h4v1h-4zM16 18h4v1h-4zM6 19h14v1h-14z" fill="#008000"/><path d="M10 7h6v1h-6zM9 8h9v1h-9zM8 9h2v1h-2zM16 9h3v1h-3zM7 10h2v1h-2zM17 10h3v1h-3zM6 11h3v1h-3zM18 11h2v1h-2zM6 12h3v1h-3zM18 12h2v1h-2zM6 13h3v1h-3zM18 13h2v1h-2zM7 14h2v1h-2zM18 14h2v1h-2zM7 15h2v1h-2zM17 15h3v1h-3zM8 16h2v1h-2zM16 16h3v1h-3zM9 17h9v1h-9zM10 18h6v1h-6z" fill="#fff"/></svg></div>
<div style="position:absolute;left:259px;top:53px;width:24px;height:24px;background:#ECE9D8;box-shadow:inset 1px 1px 0 #fff, inset -1px -1px 0 #ACA899;"><svg style="position:absolute;left:0px;top:0px" width="24" height="24" viewBox="0 0 24 24" shape-rendering="crispEdges"><path d="M6 6h14v1h-14zM6 7h4v1h-4zM16 7h4v1h-4zM6 8h2v1h-2zM17 8h3v1h-3zM6 9h1v1h-1zM10 9h6v1h-6zM18 9h2v1h-2zM9 10h8v1h-8zM19 10h1v1h-1zM8 11h9v1h-9zM8 12h9v1h-9zM8 13h9v1h-9zM8 14h9v1h-9zM19 14h1v1h-1zM9 15h8v1h-8zM19 15h1v1h-1zM6 16h1v1h-1zM10 16h6v1h-6zM18 16h2v1h-2zM6 17h2v1h-2zM17 17h3v1h-3zM6 18h4v1h-4zM16 18h4v1h-4zM6 19h14v1h-14z" fill="#FF0000"/><path d="M10 7h6v1h-6zM8 8h9v1h-9zM7 9h3v1h-3zM16 9h2v1h-2zM6 10h3v1h-3zM17 10h2v1h-2zM6 11h2v1h-2zM17 11h3v1h-3zM6 12h2v1h-2zM17 12h3v1h-3zM6 13h2v1h-2zM17 13h3v1h-3zM6 14h2v1h-2zM17 14h2v1h-2zM6 15h3v1h-3zM17 15h2v1h-2zM7 16h3v1h-3zM16 16h2v1h-2zM8 17h9v1h-9zM10 18h6v1h-6z" fill="#fff"/></svg></div>
<div style="position:absolute;left:283px;top:53px;width:24px;height:24px;background:#ECE9D8;box-shadow:inset 1px 1px 0 #fff, inset -1px -1px 0 #ACA899;"><svg style="position:absolute;left:0px;top:0px" width="24" height="24" viewBox="0 0 24 24" shape-rendering="crispEdges"><path d="M7 5h12v1h-12zM7 6h12v1h-12zM7 7h6v1h-6zM15 7h4v1h-4zM7 8h6v1h-6zM15 8h4v1h-4zM7 9h5v1h-5zM14 9h5v1h-5zM7 10h4v1h-4zM15 10h4v1h-4zM7 11h3v1h-3zM11 11h1v1h-1zM17 11h2v1h-2zM7 12h5v1h-5zM14 12h5v1h-5zM7 13h5v1h-5zM14 13h5v1h-5z" fill="#00FFFF"/><path d="M13 7h2v1h-2zM13 8h2v1h-2zM12 9h2v1h-2zM11 10h4v1h-4zM10 11h1v1h-1zM12 11h2v1h-2zM15 11h2v1h-2zM12 12h2v1h-2zM12 13h2v1h-2zM12 14h3v1h-3zM11 15h2v1h-2zM15 15h1v1h-1zM11 16h1v1h-1zM16 16h1v1h-1zM10 17h1v1h-1zM16 17h2v1h-2zM9 18h2v1h-2zM9 19h1v1h-1z" fill="#000"/><path d="M14 11h1v1h-1z" fill="#fff"/><path d="M7 14h5v1h-5zM15 14h4v1h-4zM7 15h4v1h-4zM13 15h2v1h-2zM16 15h3v1h-3zM7 16h4v1h-4zM12 16h4v1h-4zM17 16h2v1h-2zM7 17h3v1h-3zM11 17h5v1h-5zM18 17h1v1h-1zM7 18h2v1h-2zM11 18h8v1h-8zM7 19h2v1h-2zM10 19h9v1h-9zM7 20h12v1h-12z" fill="#FFFF00"/></svg></div>
<div style="position:absolute;left:307px;top:53px;width:24px;height:24px;background:#ECE9D8;box-shadow:inset 1px 1px 0 #fff, inset -1px -1px 0 #ACA899;"><svg style="position:absolute;left:0px;top:0px" width="24" height="24" viewBox="0 0 24 24" shape-rendering="crispEdges"><path d="M6 5h14v1h-14zM5 6h1v1h-1zM20 6h1v1h-1zM5 7h1v1h-1zM20 7h1v1h-1zM5 8h1v1h-1zM7 8h1v1h-1zM20 8h1v1h-1zM5 9h1v1h-1zM20 9h1v1h-1zM5 10h1v1h-1zM7 10h1v1h-1zM9 10h3v1h-3zM20 10h1v1h-1zM5 11h1v1h-1zM14 11h1v1h-1zM17 11h1v1h-1zM20 11h1v1h-1zM5 12h1v1h-1zM14 12h1v1h-1zM16 12h2v1h-2zM20 12h1v1h-1zM5 13h1v1h-1zM7 13h3v1h-3zM12 13h1v1h-1zM14 13h1v1h-1zM17 13h1v1h-1zM20 13h1v1h-1zM5 14h1v1h-1zM14 14h4v1h-4zM20 14h1v1h-1zM5 15h1v1h-1zM17 15h1v1h-1zM20 15h1v1h-1zM5 16h1v1h-1zM20 16h1v1h-1zM5 17h1v1h-1zM8 17h2v1h-2zM13 17h1v1h-1zM15 17h2v1h-2zM20 17h1v1h-1zM5 18h1v1h-1zM8 18h2v1h-2zM20 18h1v1h-1zM5 19h1v1h-1zM20 19h1v1h-1zM6 20h14v1h-14z" fill="#000"/><path d="M6 6h5v1h-5zM15 6h5v1h-5zM6 7h8v1h-8zM15 7h1v1h-1zM17 7h3v1h-3zM6 8h1v1h-1zM8 8h1v1h-1zM11 8h1v1h-1zM13 8h2v1h-2zM18 8h2v1h-2zM6 9h8v1h-8zM19 9h1v1h-1zM6 10h1v1h-1zM8 10h1v1h-1zM12 10h1v1h-1zM6 11h8v1h-8zM15 11h2v1h-2zM18 11h2v1h-2zM6 12h8v1h-8zM15 12h1v1h-1zM18 12h2v1h-2zM6 13h1v1h-1zM10 13h2v1h-2zM13 13h1v1h-1zM15 13h2v1h-2zM18 13h2v1h-2zM8 14h1v1h-1zM11 14h3v1h-3zM18 14h2v1h-2zM6 15h6v1h-6zM14 15h2v1h-2zM18 15h2v1h-2zM6 16h1v1h-1zM11 16h9v1h-9zM6 17h1v1h-1zM11 17h2v1h-2zM14 17h1v1h-1zM17 17h3v1h-3zM6 18h1v1h-1zM11 18h9v1h-9zM6 19h1v1h-1zM11 19h9v1h-9z" fill="#fff"/><path d="M11 6h4v1h-4zM14 7h1v1h-1zM9 8h2v1h-2zM12 8h1v1h-1zM12 15h2v1h-2zM16 15h1v1h-1z" fill="#C0C0C0"/><path d="M16 7h1v1h-1zM15 8h3v1h-3zM14 9h5v1h-5zM13 10h7v1h-7zM6 14h2v1h-2zM9 14h2v1h-2zM7 16h4v1h-4zM7 17h1v1h-1zM10 17h1v1h-1zM7 18h1v1h-1zM10 18h1v1h-1zM7 19h4v1h-4z" fill="#FF0000"/></svg></div>
<div style="position:absolute;left:331px;top:53px;width:24px;height:24px;background:#ECE9D8;box-shadow:inset 1px 1px 0 #fff, inset -1px -1px 0 #ACA899;"><svg style="position:absolute;left:0px;top:0px" width="24" height="24" viewBox="0 0 24 24" shape-rendering="crispEdges"><path d="M6 5h14v1h-14zM5 6h1v1h-1zM20 6h1v1h-1zM5 7h1v1h-1zM20 7h1v1h-1zM5 8h1v1h-1zM7 8h1v1h-1zM20 8h1v1h-1zM5 9h1v1h-1zM20 9h1v1h-1zM5 10h1v1h-1zM7 10h1v1h-1zM9 10h3v1h-3zM20 10h1v1h-1zM5 11h1v1h-1zM14 11h1v1h-1zM17 11h1v1h-1zM20 11h1v1h-1zM5 12h1v1h-1zM14 12h1v1h-1zM16 12h2v1h-2zM20 12h1v1h-1zM5 13h1v1h-1zM7 13h3v1h-3zM12 13h1v1h-1zM14 13h1v1h-1zM17 13h1v1h-1zM20 13h1v1h-1zM5 14h1v1h-1zM14 14h4v1h-4zM20 14h1v1h-1zM5 15h1v1h-1zM7 15h1v1h-1zM10 15h2v1h-2zM17 15h1v1h-1zM20 15h1v1h-1zM5 16h1v1h-1zM20 16h1v1h-1zM5 17h1v1h-1zM7 17h1v1h-1zM13 17h1v1h-1zM15 17h2v1h-2zM20 17h1v1h-1zM5 18h1v1h-1zM20 18h1v1h-1zM5 19h1v1h-1zM20 19h1v1h-1zM6 20h14v1h-14z" fill="#000"/><path d="M6 6h5v1h-5zM15 6h5v1h-5zM6 7h8v1h-8zM15 7h1v1h-1zM17 7h3v1h-3zM6 8h1v1h-1zM8 8h1v1h-1zM11 8h1v1h-1zM13 8h2v1h-2zM18 8h2v1h-2zM6 9h8v1h-8zM19 9h1v1h-1zM6 10h1v1h-1zM8 10h1v1h-1zM12 10h1v1h-1zM6 11h8v1h-8zM15 11h2v1h-2zM18 11h2v1h-2zM6 12h8v1h-8zM15 12h1v1h-1zM18 12h2v1h-2zM6 13h1v1h-1zM10 13h2v1h-2zM13 13h1v1h-1zM15 13h2v1h-2zM18 13h2v1h-2zM6 14h8v1h-8zM18 14h2v1h-2zM6 15h1v1h-1zM8 15h1v1h-1zM14 15h2v1h-2zM18 15h2v1h-2zM6 16h14v1h-14zM6 17h1v1h-1zM8 17h1v1h-1zM12 17h1v1h-1zM14 17h1v1h-1zM17 17h3v1h-3zM6 18h14v1h-14zM6 19h14v1h-14z" fill="#fff"/><path d="M11 6h4v1h-4zM14 7h1v1h-1zM9 8h2v1h-2zM12 8h1v1h-1zM9 15h1v1h-1zM12 15h2v1h-2zM16 15h1v1h-1zM9 17h3v1h-3z" fill="#C0C0C0"/><path d="M16 7h1v1h-1zM15 8h3v1h-3zM14 9h5v1h-5zM13 10h7v1h-7z" fill="#FF0000"/></svg></div>
<div style="position:absolute;left:379px;top:53px;width:24px;height:24px;background:#ECE9D8;box-shadow:inset 1px 1px 0 #fff, inset -1px -1px 0 #716F64, inset -2px -2px 0 #ACA899;"><svg style="position:absolute;left:0px;top:0px" width="24" height="24" viewBox="0 0 24 24" shape-rendering="crispEdges"><path d="M10 5h6v1h-6zM8 6h2v1h-2zM16 6h2v1h-2zM20 6h1v1h-1zM7 7h1v1h-1zM6 8h1v1h-1zM5 9h1v1h-1zM15 9h1v1h-1zM5 10h1v1h-1zM15 10h1v1h-1zM5 14h7v1h-7zM17 15h1v1h-1zM10 16h1v1h-1zM11 17h1v1h-1zM5 19h2v1h-2z" fill="#00FF00"/><path d="M10 6h6v1h-6zM8 7h13v1h-13zM7 8h3v1h-3zM15 8h6v1h-6zM6 9h3v1h-3zM16 9h5v1h-5zM6 10h2v1h-2zM16 10h5v1h-5zM5 15h5v1h-5zM18 15h1v1h-1zM5 16h5v1h-5zM17 16h2v1h-2zM5 17h6v1h-6zM12 17h6v1h-6zM5 18h2v1h-2zM8 18h9v1h-9zM9 19h8v1h-8z" fill="#008000"/><path d="M21 7h1v1h-1zM10 8h5v1h-5zM21 8h1v1h-1zM9 9h1v1h-1zM21 9h1v1h-1zM8 10h1v1h-1zM21 10h1v1h-1zM5 11h4v1h-4zM15 11h7v1h-7zM19 15h2v1h-2zM19 16h2v1h-2zM18 17h2v1h-2zM7 18h1v1h-1zM17 18h2v1h-2zM7 19h2v1h-2zM17 19h2v1h-2zM9 20h8v1h-8zM10 21h6v1h-6z" fill="#000080"/><path d="M10 9h5v1h-5zM9 10h6v1h-6zM9 11h6v1h-6zM9 12h6v1h-6zM11 13h4v1h-4zM12 14h4v1h-4zM10 15h7v1h-7zM11 16h6v1h-6z" fill="#fff"/></svg></div>
<div style="position:absolute;left:403px;top:53px;width:25px;height:24px;background:#ECE9D8;box-shadow:inset 1px 1px 0 #fff, inset -1px -1px 0 #716F64, inset -2px -2px 0 #ACA899;"><svg style="position:absolute;left:0px;top:0px" width="24" height="24" viewBox="0 0 24 24" shape-rendering="crispEdges"><path d="M10 5h6v1h-6zM8 6h2v1h-2zM16 6h2v1h-2zM20 6h1v1h-1zM7 7h1v1h-1zM6 8h1v1h-1zM5 9h1v1h-1zM15 9h1v1h-1zM5 10h1v1h-1zM15 10h1v1h-1zM5 14h5v1h-5zM17 15h1v1h-1zM11 17h1v1h-1zM5 19h2v1h-2z" fill="#00FF00"/><path d="M10 6h6v1h-6zM8 7h13v1h-13zM7 8h3v1h-3zM15 8h6v1h-6zM6 9h3v1h-3zM16 9h5v1h-5zM6 10h2v1h-2zM16 10h5v1h-5zM5 15h5v1h-5zM18 15h1v1h-1zM5 16h5v1h-5zM17 16h2v1h-2zM5 17h6v1h-6zM12 17h6v1h-6zM5 18h2v1h-2zM8 18h9v1h-9zM9 19h8v1h-8z" fill="#008000"/><path d="M21 7h1v1h-1zM10 8h5v1h-5zM21 8h1v1h-1zM9 9h1v1h-1zM21 9h1v1h-1zM8 10h1v1h-1zM21 10h1v1h-1zM5 11h4v1h-4zM15 11h7v1h-7zM19 15h2v1h-2zM19 16h2v1h-2zM18 17h2v1h-2zM7 18h1v1h-1zM17 18h2v1h-2zM7 19h2v1h-2zM17 19h2v1h-2zM9 20h8v1h-8zM10 21h6v1h-6z" fill="#000080"/><path d="M10 9h2v1h-2zM13 9h2v1h-2zM9 10h2v1h-2zM14 10h1v1h-1zM9 11h1v1h-1zM15 14h1v1h-1zM15 15h2v1h-2zM15 16h2v1h-2z" fill="#fff"/><path d="M12 9h1v1h-1zM11 10h3v1h-3zM10 11h5v1h-5zM9 12h7v1h-7z" fill="#FF0000"/><path d="M10 13h5v1h-5zM10 14h5v1h-5zM10 15h5v1h-5zM10 16h5v1h-5z" fill="#000"/></svg></div>
<div style="position:absolute;left:475px;top:29px;width:24px;height:24px;background:#ECE9D8;box-shadow:inset 1px 1px 0 #fff, inset -1px -1px 0 #716F64, inset -2px -2px 0 #ACA899;"><svg style="position:absolute;left:0px;top:0px" width="24" height="24" viewBox="0 0 24 24" shape-rendering="crispEdges"><path d="M4 3h4v1h-4zM3 4h1v1h-1zM8 4h1v1h-1zM3 5h1v1h-1zM9 5h1v1h-1zM11 5h1v1h-1zM4 6h1v1h-1zM10 6h1v1h-1zM12 6h1v1h-1zM5 7h1v1h-1zM12 7h1v1h-1zM6 8h1v1h-1zM13 8h2v1h-2zM7 9h1v1h-1zM15 9h2v1h-2zM8 10h1v1h-1zM16 10h1v1h-1zM9 11h1v1h-1zM15 11h1v1h-1zM9 12h1v1h-1zM14 12h1v1h-1zM10 13h1v1h-1zM13 13h1v1h-1zM10 14h1v1h-1zM12 14h1v1h-1zM11 15h1v1h-1z" fill="#000"/><path d="M4 4h4v1h-4zM4 5h5v1h-5zM5 6h5v1h-5zM6 7h6v1h-6zM7 8h6v1h-6zM8 9h4v1h-4zM9 10h2v1h-2zM16 11h7v1h-7zM16 12h1v1h-1zM18 12h1v1h-1zM20 12h1v1h-1zM22 12h1v1h-1zM14 13h9v1h-9zM14 14h1v1h-1zM16 14h1v1h-1zM18 14h1v1h-1zM20 14h1v1h-1zM22 14h1v1h-1zM12 15h11v1h-11zM12 16h1v1h-1zM14 16h1v1h-1zM16 16h1v1h-1zM18 16h1v1h-1zM20 16h1v1h-1zM22 16h1v1h-1zM11 17h12v1h-12zM12 18h1v1h-1zM14 18h1v1h-1zM16 18h1v1h-1zM18 18h1v1h-1zM20 18h1v1h-1zM22 18h1v1h-1zM11 19h12v1h-12zM12 20h1v1h-1zM14 20h1v1h-1zM16 20h1v1h-1zM18 20h1v1h-1zM20 20h1v1h-1zM22 20h1v1h-1zM11 21h12v1h-12zM12 22h1v1h-1zM14 22h1v1h-1zM16 22h1v1h-1zM18 22h1v1h-1zM20 22h1v1h-1zM22 22h1v1h-1z" fill="#fff"/><path d="M10 5h1v1h-1zM11 6h1v1h-1zM12 9h3v1h-3zM11 10h5v1h-5zM11 11h4v1h-4zM12 12h2v1h-2z" fill="#FF0000"/><path d="M10 11h1v1h-1zM10 12h2v1h-2zM11 13h2v1h-2zM11 14h1v1h-1z" fill="#800000"/><path d="M15 12h1v1h-1zM17 12h1v1h-1zM19 12h1v1h-1zM21 12h1v1h-1zM13 14h1v1h-1zM15 14h1v1h-1zM17 14h1v1h-1zM19 14h1v1h-1zM21 14h1v1h-1zM11 16h1v1h-1zM13 16h1v1h-1zM15 16h1v1h-1zM17 16h1v1h-1zM19 16h1v1h-1zM21 16h1v1h-1zM11 18h1v1h-1zM13 18h1v1h-1zM15 18h1v1h-1zM17 18h1v1h-1zM19 18h1v1h-1zM21 18h1v1h-1zM11 20h1v1h-1zM13 20h1v1h-1zM15 20h1v1h-1zM17 20h1v1h-1zM19 20h1v1h-1zM21 20h1v1h-1zM11 22h1v1h-1zM13 22h1v1h-1zM15 22h1v1h-1zM17 22h1v1h-1zM19 22h1v1h-1zM21 22h1v1h-1z" fill="#FFFF00"/></svg></div>
<div style="position:absolute;left:499px;top:29px;width:25px;height:24px;background:#ECE9D8;box-shadow:inset 1px 1px 0 #fff, inset -1px -1px 0 #716F64, inset -2px -2px 0 #ACA899;"><svg style="position:absolute;left:0px;top:0px" width="24" height="24" viewBox="0 0 24 24" shape-rendering="crispEdges"><path d="M4 3h4v1h-4zM3 4h1v1h-1zM8 4h1v1h-1zM3 5h1v1h-1zM9 5h1v1h-1zM11 5h1v1h-1zM4 6h1v1h-1zM10 6h1v1h-1zM12 6h1v1h-1zM5 7h1v1h-1zM12 7h1v1h-1zM6 8h1v1h-1zM13 8h2v1h-2zM7 9h1v1h-1zM15 9h2v1h-2zM8 10h1v1h-1zM16 10h1v1h-1zM9 11h1v1h-1zM15 11h1v1h-1zM9 12h1v1h-1zM14 12h1v1h-1zM10 13h1v1h-1zM13 13h1v1h-1zM10 14h1v1h-1zM12 14h1v1h-1zM14 14h4v1h-4zM19 14h4v1h-4zM11 15h1v1h-1zM14 15h2v1h-2zM19 15h2v1h-2zM14 16h2v1h-2zM19 16h2v1h-2zM14 17h4v1h-4zM19 17h4v1h-4zM14 18h2v1h-2zM21 18h2v1h-2zM14 19h2v1h-2zM21 19h2v1h-2zM14 20h2v1h-2zM19 20h4v1h-4zM14 21h2v1h-2zM19 21h3v1h-3z" fill="#000"/><path d="M4 4h4v1h-4zM4 5h5v1h-5zM5 6h5v1h-5zM6 7h6v1h-6zM7 8h6v1h-6zM8 9h4v1h-4zM9 10h2v1h-2zM16 11h7v1h-7zM16 12h1v1h-1zM18 12h1v1h-1zM20 12h1v1h-1zM22 12h1v1h-1zM14 13h9v1h-9zM18 14h1v1h-1zM12 15h2v1h-2zM16 15h3v1h-3zM21 15h2v1h-2zM12 16h1v1h-1zM16 16h1v1h-1zM18 16h1v1h-1zM22 16h1v1h-1zM11 17h3v1h-3zM18 17h1v1h-1zM12 18h1v1h-1zM16 18h1v1h-1zM18 18h1v1h-1zM20 18h1v1h-1zM11 19h3v1h-3zM16 19h5v1h-5zM12 20h1v1h-1zM16 20h1v1h-1zM18 20h1v1h-1zM11 21h3v1h-3zM16 21h3v1h-3zM22 21h1v1h-1zM12 22h1v1h-1zM14 22h1v1h-1zM16 22h1v1h-1zM18 22h1v1h-1zM20 22h1v1h-1zM22 22h1v1h-1z" fill="#fff"/><path d="M10 5h1v1h-1zM11 6h1v1h-1zM12 9h3v1h-3zM11 10h5v1h-5zM11 11h4v1h-4zM12 12h2v1h-2z" fill="#FF0000"/><path d="M10 11h1v1h-1zM10 12h2v1h-2zM11 13h2v1h-2zM11 14h1v1h-1z" fill="#800000"/><path d="M15 12h1v1h-1zM17 12h1v1h-1zM19 12h1v1h-1zM21 12h1v1h-1zM13 14h1v1h-1zM11 16h1v1h-1zM13 16h1v1h-1zM17 16h1v1h-1zM21 16h1v1h-1zM11 18h1v1h-1zM13 18h1v1h-1zM17 18h1v1h-1zM19 18h1v1h-1zM11 20h1v1h-1zM13 20h1v1h-1zM17 20h1v1h-1zM11 22h1v1h-1zM13 22h1v1h-1zM15 22h1v1h-1zM17 22h1v1h-1zM19 22h1v1h-1zM21 22h1v1h-1z" fill="#FFFF00"/></svg></div>
<div style="position:absolute;left:475px;top:53px;width:24px;height:24px;background:#ECE9D8;box-shadow:inset 1px 1px 0 #fff, inset -1px -1px 0 #716F64, inset -2px -2px 0 #ACA899;"><svg style="position:absolute;left:0px;top:0px" width="24" height="24" viewBox="0 0 24 24" shape-rendering="crispEdges"><path d="M5 5h7v1h-7zM5 6h1v1h-1zM7 6h6v1h-6zM5 7h1v1h-1zM7 7h1v1h-1zM9 7h5v1h-5zM5 8h1v1h-1zM7 8h1v1h-1zM9 8h1v1h-1zM11 8h4v1h-4zM5 9h1v1h-1zM7 9h1v1h-1zM9 9h1v1h-1zM11 9h1v1h-1zM17 9h2v1h-2zM5 10h1v1h-1zM7 10h1v1h-1zM9 10h1v1h-1zM11 10h1v1h-1zM13 10h2v1h-2zM18 10h2v1h-2zM5 11h1v1h-1zM7 11h1v1h-1zM9 11h1v1h-1zM11 11h1v1h-1zM19 11h2v1h-2zM5 12h1v1h-1zM7 12h1v1h-1zM9 12h1v1h-1zM11 12h1v1h-1zM13 12h3v1h-3zM20 12h1v1h-1zM5 13h1v1h-1zM7 13h1v1h-1zM9 13h1v1h-1zM11 13h1v1h-1zM20 13h1v1h-1zM5 14h1v1h-1zM7 14h1v1h-1zM9 14h1v1h-1zM11 14h1v1h-1zM13 14h6v1h-6zM20 14h1v1h-1zM5 15h1v1h-1zM7 15h1v1h-1zM9 15h1v1h-1zM11 15h1v1h-1zM20 15h1v1h-1zM5 16h1v1h-1zM7 16h1v1h-1zM9 16h1v1h-1zM11 16h1v1h-1zM13 16h6v1h-6zM20 16h1v1h-1zM5 17h3v1h-3zM9 17h1v1h-1zM11 17h1v1h-1zM20 17h1v1h-1zM7 18h3v1h-3zM11 18h1v1h-1zM13 18h4v1h-4zM20 18h1v1h-1zM9 19h3v1h-3zM20 19h1v1h-1zM11 20h10v1h-10z" fill="#000"/><path d="M6 6h1v1h-1zM6 7h1v1h-1zM8 7h1v1h-1zM6 8h1v1h-1zM8 8h1v1h-1zM10 8h1v1h-1zM6 9h1v1h-1zM8 9h1v1h-1zM10 9h1v1h-1zM12 9h5v1h-5zM6 10h1v1h-1zM8 10h1v1h-1zM10 10h1v1h-1zM12 10h1v1h-1zM15 10h3v1h-3zM6 11h1v1h-1zM8 11h1v1h-1zM10 11h1v1h-1zM12 11h7v1h-7zM6 12h1v1h-1zM8 12h1v1h-1zM10 12h1v1h-1zM12 12h1v1h-1zM16 12h4v1h-4zM6 13h1v1h-1zM8 13h1v1h-1zM10 13h1v1h-1zM12 13h8v1h-8zM6 14h1v1h-1zM8 14h1v1h-1zM10 14h1v1h-1zM12 14h1v1h-1zM19 14h1v1h-1zM6 15h1v1h-1zM8 15h1v1h-1zM10 15h1v1h-1zM12 15h8v1h-8zM6 16h1v1h-1zM8 16h1v1h-1zM10 16h1v1h-1zM12 16h1v1h-1zM19 16h1v1h-1zM8 17h1v1h-1zM10 17h1v1h-1zM12 17h8v1h-8zM10 18h1v1h-1zM12 18h1v1h-1zM17 18h3v1h-3zM12 19h8v1h-8z" fill="#fff"/></svg></div>
<div style="position:absolute;left:499px;top:53px;width:25px;height:24px;background:#ECE9D8;box-shadow:inset 1px 1px 0 #fff, inset -1px -1px 0 #716F64, inset -2px -2px 0 #ACA899;"><svg style="position:absolute;left:0px;top:0px" width="24" height="24" viewBox="0 0 24 24" shape-rendering="crispEdges"><path d="M5 5h7v1h-7zM5 6h1v1h-1zM7 6h6v1h-6zM5 7h1v1h-1zM7 7h1v1h-1zM9 7h5v1h-5zM5 8h1v1h-1zM7 8h1v1h-1zM9 8h1v1h-1zM11 8h4v1h-4zM5 9h1v1h-1zM7 9h1v1h-1zM9 9h1v1h-1zM11 9h1v1h-1zM17 9h2v1h-2zM5 10h1v1h-1zM7 10h1v1h-1zM9 10h1v1h-1zM11 10h1v1h-1zM13 10h2v1h-2zM18 10h2v1h-2zM5 11h1v1h-1zM7 11h1v1h-1zM9 11h1v1h-1zM11 11h1v1h-1zM19 11h2v1h-2zM5 12h1v1h-1zM7 12h1v1h-1zM9 12h1v1h-1zM11 12h1v1h-1zM13 12h3v1h-3zM20 12h1v1h-1zM5 13h1v1h-1zM7 13h1v1h-1zM9 13h1v1h-1zM11 13h1v1h-1zM20 13h1v1h-1zM5 14h1v1h-1zM7 14h1v1h-1zM9 14h1v1h-1zM11 14h1v1h-1zM13 14h6v1h-6zM20 14h1v1h-1zM5 15h1v1h-1zM7 15h1v1h-1zM9 15h1v1h-1zM11 15h1v1h-1zM20 15h1v1h-1zM5 16h1v1h-1zM7 16h1v1h-1zM9 16h1v1h-1zM11 16h1v1h-1zM13 16h6v1h-6zM20 16h1v1h-1zM5 17h3v1h-3zM9 17h1v1h-1zM11 17h1v1h-1zM20 17h1v1h-1zM7 18h3v1h-3zM11 18h1v1h-1zM13 18h4v1h-4zM20 18h1v1h-1zM9 19h3v1h-3zM20 19h1v1h-1zM11 20h10v1h-10z" fill="#000"/><path d="M6 6h1v1h-1zM6 7h1v1h-1zM8 7h1v1h-1zM6 8h1v1h-1zM8 8h1v1h-1zM10 8h1v1h-1zM6 9h1v1h-1zM8 9h1v1h-1zM10 9h1v1h-1zM12 9h5v1h-5zM6 10h1v1h-1zM8 10h1v1h-1zM10 10h1v1h-1zM12 10h1v1h-1zM15 10h3v1h-3zM6 11h1v1h-1zM8 11h1v1h-1zM10 11h1v1h-1zM12 11h7v1h-7zM6 12h1v1h-1zM8 12h1v1h-1zM10 12h1v1h-1zM12 12h1v1h-1zM16 12h4v1h-4zM6 13h1v1h-1zM8 13h1v1h-1zM10 13h1v1h-1zM12 13h8v1h-8zM6 14h1v1h-1zM8 14h1v1h-1zM10 14h1v1h-1zM12 14h1v1h-1zM19 14h1v1h-1zM6 15h1v1h-1zM8 15h1v1h-1zM10 15h1v1h-1zM12 15h8v1h-8zM6 16h1v1h-1zM8 16h1v1h-1zM10 16h1v1h-1zM12 16h1v1h-1zM19 16h1v1h-1zM8 17h1v1h-1zM10 17h1v1h-1zM12 17h8v1h-8zM10 18h1v1h-1zM12 18h1v1h-1zM17 18h3v1h-3zM12 19h8v1h-8z" fill="#fff"/></svg></div>
<div style="position:absolute;left:547px;top:29px;width:25px;height:24px;background:#ECE9D8;box-shadow:inset 1px 1px 0 #fff, inset -1px -1px 0 #716F64, inset -2px -2px 0 #ACA899;"><svg style="position:absolute;left:0px;top:0px" width="24" height="24" viewBox="0 0 24 24" shape-rendering="crispEdges"><path d="M4 3h4v1h-4zM3 4h1v1h-1zM8 4h1v1h-1zM3 5h1v1h-1zM9 5h1v1h-1zM11 5h1v1h-1zM4 6h1v1h-1zM10 6h1v1h-1zM12 6h1v1h-1zM5 7h1v1h-1zM12 7h1v1h-1zM6 8h1v1h-1zM13 8h2v1h-2zM7 9h1v1h-1zM15 9h2v1h-2zM8 10h1v1h-1zM16 10h1v1h-1zM9 11h1v1h-1zM15 11h1v1h-1zM9 12h1v1h-1zM14 12h1v1h-1zM10 13h1v1h-1zM13 13h1v1h-1zM10 14h1v1h-1zM12 14h8v1h-8zM11 15h1v1h-1zM13 15h7v1h-7zM15 16h3v1h-3zM15 17h3v1h-3zM15 18h3v1h-3zM15 19h3v1h-3zM15 20h3v1h-3zM15 21h3v1h-3z" fill="#000"/><path d="M4 4h4v1h-4zM4 5h5v1h-5zM5 6h5v1h-5zM6 7h6v1h-6zM7 8h6v1h-6zM8 9h4v1h-4zM9 10h2v1h-2zM16 11h6v1h-6zM16 12h1v1h-1zM18 12h1v1h-1zM20 12h1v1h-1zM14 13h8v1h-8zM20 14h1v1h-1zM12 15h1v1h-1zM20 15h2v1h-2zM12 16h1v1h-1zM14 16h1v1h-1zM18 16h1v1h-1zM20 16h1v1h-1zM11 17h4v1h-4zM18 17h4v1h-4zM12 18h1v1h-1zM14 18h1v1h-1zM18 18h1v1h-1zM20 18h1v1h-1zM11 19h4v1h-4zM18 19h4v1h-4zM12 20h1v1h-1zM14 20h1v1h-1zM18 20h1v1h-1zM20 20h1v1h-1zM11 21h4v1h-4zM18 21h4v1h-4zM12 22h1v1h-1zM14 22h1v1h-1zM16 22h1v1h-1zM18 22h1v1h-1zM20 22h1v1h-1z" fill="#fff"/><path d="M10 5h1v1h-1zM11 6h1v1h-1zM12 9h3v1h-3zM11 10h5v1h-5zM11 11h4v1h-4zM12 12h2v1h-2z" fill="#FF0000"/><path d="M10 11h1v1h-1zM10 12h2v1h-2zM11 13h2v1h-2zM11 14h1v1h-1z" fill="#800000"/><path d="M15 12h1v1h-1zM17 12h1v1h-1zM19 12h1v1h-1zM21 12h1v1h-1zM21 14h1v1h-1zM11 16h1v1h-1zM13 16h1v1h-1zM19 16h1v1h-1zM21 16h1v1h-1zM11 18h1v1h-1zM13 18h1v1h-1zM19 18h1v1h-1zM21 18h1v1h-1zM11 20h1v1h-1zM13 20h1v1h-1zM19 20h1v1h-1zM21 20h1v1h-1zM11 22h1v1h-1zM13 22h1v1h-1zM15 22h1v1h-1zM17 22h1v1h-1zM19 22h1v1h-1zM21 22h1v1h-1z" fill="#FFFF00"/></svg></div>
<div style="position:absolute;left:595px;top:29px;width:24px;height:24px;background:#ECE9D8;box-shadow:inset 1px 1px 0 #fff, inset -1px -1px 0 #716F64, inset -2px -2px 0 #ACA899;"><svg style="position:absolute;left:0px;top:0px" width="24" height="24" viewBox="0 0 24 24" shape-rendering="crispEdges"><path d="M4 3h4v1h-4zM3 4h1v1h-1zM8 4h1v1h-1zM3 5h1v1h-1zM9 5h1v1h-1zM11 5h1v1h-1zM4 6h1v1h-1zM10 6h1v1h-1zM12 6h1v1h-1zM5 7h1v1h-1zM12 7h1v1h-1zM6 8h1v1h-1zM13 8h2v1h-2zM7 9h1v1h-1zM15 9h2v1h-2zM8 10h1v1h-1zM16 10h1v1h-1zM9 11h1v1h-1zM15 11h1v1h-1zM9 12h1v1h-1zM14 12h1v1h-1zM10 13h1v1h-1zM13 13h1v1h-1zM10 14h1v1h-1zM12 14h1v1h-1zM11 15h1v1h-1zM3 16h6v1h-6zM3 17h1v1h-1zM5 17h2v1h-2zM8 17h1v1h-1zM3 18h1v1h-1zM5 18h2v1h-2zM8 18h1v1h-1zM3 19h1v1h-1zM6 19h1v1h-1zM8 19h1v1h-1zM3 20h3v1h-3zM8 20h1v1h-1zM3 21h1v1h-1zM8 21h1v1h-1zM3 22h7v1h-7z" fill="#000"/><path d="M4 4h4v1h-4zM4 5h5v1h-5zM5 6h5v1h-5zM6 7h6v1h-6zM7 8h6v1h-6zM8 9h4v1h-4zM9 10h2v1h-2zM16 11h7v1h-7zM16 12h1v1h-1zM20 12h1v1h-1zM22 12h1v1h-1zM14 13h3v1h-3zM19 13h4v1h-4zM14 14h1v1h-1zM16 14h1v1h-1zM20 14h1v1h-1zM22 14h1v1h-1zM12 15h4v1h-4zM20 15h3v1h-3zM12 16h1v1h-1zM14 16h1v1h-1zM22 16h1v1h-1zM4 17h1v1h-1zM7 17h1v1h-1zM11 17h2v1h-2zM4 18h1v1h-1zM7 18h1v1h-1zM12 18h1v1h-1zM4 19h2v1h-2zM7 19h1v1h-1zM11 19h4v1h-4zM21 19h2v1h-2zM6 20h2v1h-2zM12 20h1v1h-1zM14 20h1v1h-1zM20 20h1v1h-1zM22 20h1v1h-1zM4 21h4v1h-4zM11 21h6v1h-6zM19 21h4v1h-4zM12 22h1v1h-1zM14 22h1v1h-1zM16 22h1v1h-1zM20 22h1v1h-1zM22 22h1v1h-1z" fill="#fff"/><path d="M10 5h1v1h-1zM11 6h1v1h-1zM12 9h3v1h-3zM11 10h5v1h-5zM11 11h4v1h-4zM12 12h2v1h-2zM17 12h2v1h-2zM17 13h2v1h-2zM17 14h2v1h-2zM16 15h4v1h-4zM15 16h6v1h-6zM13 17h10v1h-10zM13 18h10v1h-10zM15 19h6v1h-6zM16 20h4v1h-4zM17 21h2v1h-2zM17 22h2v1h-2z" fill="#FF0000"/><path d="M10 11h1v1h-1zM10 12h2v1h-2zM11 13h2v1h-2zM11 14h1v1h-1z" fill="#800000"/><path d="M15 12h1v1h-1zM19 12h1v1h-1zM21 12h1v1h-1zM13 14h1v1h-1zM15 14h1v1h-1zM19 14h1v1h-1zM21 14h1v1h-1zM11 16h1v1h-1zM13 16h1v1h-1zM21 16h1v1h-1zM11 18h1v1h-1zM11 20h1v1h-1zM13 20h1v1h-1zM15 20h1v1h-1zM21 20h1v1h-1zM11 22h1v1h-1zM13 22h1v1h-1zM15 22h1v1h-1zM19 22h1v1h-1zM21 22h1v1h-1z" fill="#FFFF00"/></svg></div>
<div style="position:absolute;left:619px;top:29px;width:25px;height:24px;background:#ECE9D8;box-shadow:inset 1px 1px 0 #fff, inset -1px -1px 0 #716F64, inset -2px -2px 0 #ACA899;"><svg style="position:absolute;left:0px;top:0px" width="24" height="24" viewBox="0 0 24 24" shape-rendering="crispEdges"><path d="M4 3h4v1h-4zM3 4h1v1h-1zM8 4h1v1h-1zM3 5h1v1h-1zM9 5h1v1h-1zM11 5h1v1h-1zM4 6h1v1h-1zM10 6h1v1h-1zM12 6h1v1h-1zM5 7h1v1h-1zM12 7h1v1h-1zM6 8h1v1h-1zM13 8h2v1h-2zM7 9h1v1h-1zM15 9h2v1h-2zM8 10h1v1h-1zM16 10h1v1h-1zM9 11h1v1h-1zM15 11h1v1h-1zM9 12h1v1h-1zM14 12h1v1h-1zM10 13h1v1h-1zM13 13h1v1h-1zM10 14h1v1h-1zM12 14h1v1h-1zM11 15h1v1h-1zM3 18h3v1h-3zM8 18h3v1h-3zM13 18h3v1h-3zM2 19h2v1h-2zM5 19h4v1h-4zM10 19h4v1h-4zM15 19h2v1h-2zM2 20h15v1h-15zM2 21h2v1h-2zM5 21h4v1h-4zM10 21h4v1h-4zM15 21h2v1h-2z" fill="#000"/><path d="M4 4h4v1h-4zM4 5h5v1h-5zM5 6h5v1h-5zM6 7h6v1h-6zM7 8h6v1h-6zM8 9h4v1h-4zM9 10h2v1h-2zM16 11h7v1h-7zM16 12h1v1h-1zM20 12h1v1h-1zM22 12h1v1h-1zM14 13h3v1h-3zM19 13h4v1h-4zM14 14h1v1h-1zM16 14h1v1h-1zM20 14h1v1h-1zM22 14h1v1h-1zM12 15h4v1h-4zM20 15h3v1h-3zM12 16h1v1h-1zM14 16h1v1h-1zM22 16h1v1h-1zM11 17h2v1h-2zM12 18h1v1h-1zM14 19h1v1h-1zM21 19h2v1h-2zM20 20h1v1h-1zM22 20h1v1h-1zM14 21h1v1h-1zM19 21h4v1h-4zM12 22h1v1h-1zM14 22h1v1h-1zM16 22h1v1h-1zM20 22h1v1h-1zM22 22h1v1h-1z" fill="#fff"/><path d="M10 5h1v1h-1zM11 6h1v1h-1zM12 9h3v1h-3zM11 10h5v1h-5zM11 11h4v1h-4zM12 12h2v1h-2zM17 12h2v1h-2zM17 13h2v1h-2zM17 14h2v1h-2zM16 15h4v1h-4zM15 16h6v1h-6zM13 17h10v1h-10zM16 18h7v1h-7zM17 19h4v1h-4zM17 20h3v1h-3zM17 21h2v1h-2zM17 22h2v1h-2z" fill="#FF0000"/><path d="M10 11h1v1h-1zM10 12h2v1h-2zM11 13h2v1h-2zM11 14h1v1h-1z" fill="#800000"/><path d="M15 12h1v1h-1zM19 12h1v1h-1zM21 12h1v1h-1zM13 14h1v1h-1zM15 14h1v1h-1zM19 14h1v1h-1zM21 14h1v1h-1zM11 16h1v1h-1zM13 16h1v1h-1zM21 16h1v1h-1zM11 18h1v1h-1zM21 20h1v1h-1zM11 22h1v1h-1zM13 22h1v1h-1zM15 22h1v1h-1zM19 22h1v1h-1zM21 22h1v1h-1z" fill="#FFFF00"/></svg></div>
<div style="position:absolute;left:595px;top:53px;width:24px;height:24px;background:#ECE9D8;box-shadow:inset 1px 1px 0 #fff, inset -1px -1px 0 #716F64, inset -2px -2px 0 #ACA899;"><svg style="position:absolute;left:0px;top:0px" width="24" height="24" viewBox="0 0 24 24" shape-rendering="crispEdges"><path d="M4 3h4v1h-4zM3 4h1v1h-1zM8 4h1v1h-1zM3 5h1v1h-1zM9 5h1v1h-1zM11 5h1v1h-1zM4 6h1v1h-1zM10 6h1v1h-1zM12 6h1v1h-1zM5 7h1v1h-1zM12 7h1v1h-1zM6 8h1v1h-1zM13 8h2v1h-2zM7 9h1v1h-1zM15 9h2v1h-2zM8 10h1v1h-1zM16 10h1v1h-1zM9 11h1v1h-1zM15 11h1v1h-1zM9 12h1v1h-1zM14 12h1v1h-1zM10 13h1v1h-1zM13 13h1v1h-1zM10 14h1v1h-1zM12 14h1v1h-1zM11 15h1v1h-1zM5 18h2v1h-2zM3 19h6v1h-6zM3 20h6v1h-6zM5 21h2v1h-2zM5 22h2v1h-2z" fill="#000"/><path d="M4 4h4v1h-4zM4 5h5v1h-5zM5 6h5v1h-5zM6 7h6v1h-6zM7 8h6v1h-6zM8 9h4v1h-4zM9 10h2v1h-2zM16 11h7v1h-7zM16 12h1v1h-1zM20 12h1v1h-1zM22 12h1v1h-1zM14 13h3v1h-3zM19 13h4v1h-4zM14 14h1v1h-1zM16 14h1v1h-1zM20 14h1v1h-1zM22 14h1v1h-1zM12 15h4v1h-4zM20 15h3v1h-3zM12 16h1v1h-1zM14 16h1v1h-1zM22 16h1v1h-1zM11 17h2v1h-2zM12 18h1v1h-1zM11 19h4v1h-4zM21 19h2v1h-2zM12 20h1v1h-1zM14 20h1v1h-1zM20 20h1v1h-1zM22 20h1v1h-1zM11 21h6v1h-6zM19 21h4v1h-4zM12 22h1v1h-1zM14 22h1v1h-1zM16 22h1v1h-1zM20 22h1v1h-1zM22 22h1v1h-1z" fill="#fff"/><path d="M10 5h1v1h-1zM11 6h1v1h-1zM12 9h3v1h-3zM11 10h5v1h-5zM11 11h4v1h-4zM12 12h2v1h-2zM17 12h2v1h-2zM17 13h2v1h-2zM17 14h2v1h-2zM16 15h4v1h-4zM15 16h6v1h-6zM13 17h10v1h-10zM13 18h10v1h-10zM15 19h6v1h-6zM16 20h4v1h-4zM17 21h2v1h-2zM17 22h2v1h-2z" fill="#FF0000"/><path d="M10 11h1v1h-1zM10 12h2v1h-2zM11 13h2v1h-2zM11 14h1v1h-1z" fill="#800000"/><path d="M15 12h1v1h-1zM19 12h1v1h-1zM21 12h1v1h-1zM13 14h1v1h-1zM15 14h1v1h-1zM19 14h1v1h-1zM21 14h1v1h-1zM11 16h1v1h-1zM13 16h1v1h-1zM21 16h1v1h-1zM11 18h1v1h-1zM11 20h1v1h-1zM13 20h1v1h-1zM15 20h1v1h-1zM21 20h1v1h-1zM11 22h1v1h-1zM13 22h1v1h-1zM15 22h1v1h-1zM19 22h1v1h-1zM21 22h1v1h-1z" fill="#FFFF00"/></svg></div>
<div style="position:absolute;left:619px;top:53px;width:25px;height:24px;background:#ECE9D8;box-shadow:inset 1px 1px 0 #fff, inset -1px -1px 0 #716F64, inset -2px -2px 0 #ACA899;"><svg style="position:absolute;left:0px;top:0px" width="24" height="24" viewBox="0 0 24 24" shape-rendering="crispEdges"><path d="M5 5h7v1h-7zM5 6h1v1h-1zM7 6h6v1h-6zM5 7h1v1h-1zM7 7h1v1h-1zM9 7h5v1h-5zM5 8h1v1h-1zM7 8h1v1h-1zM9 8h1v1h-1zM11 8h4v1h-4zM5 9h1v1h-1zM7 9h1v1h-1zM9 9h1v1h-1zM11 9h1v1h-1zM17 9h2v1h-2zM5 10h1v1h-1zM7 10h1v1h-1zM9 10h1v1h-1zM11 10h1v1h-1zM13 10h2v1h-2zM18 10h2v1h-2zM5 11h1v1h-1zM7 11h1v1h-1zM9 11h1v1h-1zM11 11h1v1h-1zM19 11h2v1h-2zM5 12h1v1h-1zM7 12h1v1h-1zM9 12h1v1h-1zM11 12h1v1h-1zM13 12h3v1h-3zM20 12h1v1h-1zM5 13h1v1h-1zM7 13h1v1h-1zM9 13h1v1h-1zM11 13h1v1h-1zM20 13h1v1h-1zM5 14h1v1h-1zM7 14h1v1h-1zM9 14h1v1h-1zM11 14h1v1h-1zM13 14h6v1h-6zM20 14h1v1h-1zM5 15h1v1h-1zM7 15h1v1h-1zM9 15h1v1h-1zM11 15h1v1h-1zM20 15h1v1h-1zM5 16h1v1h-1zM7 16h1v1h-1zM9 16h1v1h-1zM11 16h1v1h-1zM13 16h6v1h-6zM20 16h1v1h-1zM5 17h3v1h-3zM9 17h1v1h-1zM11 17h1v1h-1zM20 17h1v1h-1zM7 18h3v1h-3zM11 18h1v1h-1zM13 18h4v1h-4zM20 18h1v1h-1zM9 19h3v1h-3zM20 19h1v1h-1zM11 20h10v1h-10z" fill="#000"/><path d="M6 6h1v1h-1zM6 7h1v1h-1zM8 7h1v1h-1zM6 8h1v1h-1zM8 8h1v1h-1zM10 8h1v1h-1zM6 9h1v1h-1zM8 9h1v1h-1zM10 9h1v1h-1zM12 9h5v1h-5zM6 10h1v1h-1zM8 10h1v1h-1zM10 10h1v1h-1zM12 10h1v1h-1zM15 10h3v1h-3zM6 11h1v1h-1zM8 11h1v1h-1zM10 11h1v1h-1zM12 11h7v1h-7zM6 12h1v1h-1zM8 12h1v1h-1zM10 12h1v1h-1zM12 12h1v1h-1zM16 12h4v1h-4zM6 13h1v1h-1zM8 13h1v1h-1zM10 13h1v1h-1zM12 13h8v1h-8zM6 14h1v1h-1zM8 14h1v1h-1zM10 14h1v1h-1zM12 14h1v1h-1zM19 14h1v1h-1zM6 15h1v1h-1zM8 15h1v1h-1zM10 15h1v1h-1zM12 15h8v1h-8zM6 16h1v1h-1zM8 16h1v1h-1zM10 16h1v1h-1zM12 16h1v1h-1zM19 16h1v1h-1zM8 17h1v1h-1zM10 17h1v1h-1zM12 17h8v1h-8zM10 18h1v1h-1zM12 18h1v1h-1zM17 18h3v1h-3zM12 19h8v1h-8z" fill="#fff"/></svg></div>
<div style="position:absolute;left:675px;top:37px;width:25px;height:25px;background:#ECE9D8;box-shadow:inset 1px 1px 0 #fff, inset -1px -1px 0 #716F64, inset -2px -2px 0 #ACA899;"><svg style="position:absolute;left:0px;top:0px" width="24" height="24" viewBox="0 0 24 24" shape-rendering="crispEdges"><path d="M6 6h14v1h-14zM6 7h1v1h-1zM19 7h1v1h-1zM6 8h1v1h-1zM19 8h1v1h-1zM6 9h1v1h-1zM19 9h1v1h-1zM6 10h1v1h-1zM19 10h1v1h-1zM6 11h1v1h-1zM19 11h1v1h-1zM6 12h1v1h-1zM19 12h1v1h-1zM6 13h1v1h-1zM19 13h1v1h-1zM6 14h1v1h-1zM19 14h1v1h-1zM6 15h1v1h-1zM19 15h1v1h-1zM6 16h1v1h-1zM19 16h1v1h-1zM6 17h1v1h-1zM19 17h1v1h-1zM6 18h1v1h-1zM19 18h1v1h-1zM6 19h14v1h-14z" fill="#000"/><path d="M7 7h12v1h-12zM7 8h1v1h-1zM12 8h2v1h-2zM18 8h1v1h-1zM7 9h1v1h-1zM9 9h2v1h-2zM12 9h2v1h-2zM15 9h2v1h-2zM18 9h1v1h-1zM7 10h1v1h-1zM9 10h2v1h-2zM12 10h2v1h-2zM15 10h2v1h-2zM18 10h1v1h-1zM7 11h1v1h-1zM12 11h2v1h-2zM18 11h1v1h-1zM7 12h12v1h-12zM7 13h1v1h-1zM12 13h2v1h-2zM18 13h1v1h-1zM7 14h12v1h-12zM7 15h1v1h-1zM12 15h2v1h-2zM18 15h1v1h-1zM7 16h1v1h-1zM9 16h2v1h-2zM12 16h2v1h-2zM15 16h2v1h-2zM18 16h1v1h-1zM7 17h1v1h-1zM9 17h2v1h-2zM12 17h2v1h-2zM15 17h2v1h-2zM18 17h1v1h-1zM7 18h1v1h-1zM12 18h2v1h-2zM18 18h1v1h-1z" fill="#FFFBF0"/><path d="M8 8h4v1h-4zM14 8h4v1h-4zM8 9h1v1h-1zM11 9h1v1h-1zM14 9h1v1h-1zM17 9h1v1h-1zM8 10h1v1h-1zM11 10h1v1h-1zM14 10h1v1h-1zM17 10h1v1h-1zM8 11h4v1h-4zM14 11h4v1h-4zM8 13h4v1h-4zM14 13h4v1h-4zM8 15h4v1h-4zM14 15h4v1h-4zM8 16h1v1h-1zM11 16h1v1h-1zM14 16h1v1h-1zM17 16h1v1h-1zM8 17h1v1h-1zM11 17h1v1h-1zM14 17h1v1h-1zM17 17h1v1h-1zM8 18h4v1h-4zM14 18h4v1h-4z" fill="#0000FF"/></svg></div>
<div style="position:absolute;left:731px;top:40px;width:25px;height:25px;background:#ECE9D8;box-shadow:inset 1px 1px 0 #fff, inset -1px -1px 0 #716F64, inset -2px -2px 0 #ACA899;"><svg style="position:absolute;left:0px;top:0px" width="24" height="24" viewBox="0 0 24 24" shape-rendering="crispEdges"><path d="M8.5 7.5 L18.5 18.5 M18.5 7.5 L8.5 18.5" stroke="#8E0000" stroke-width="3.6" stroke-linecap="round" shape-rendering="auto"/><path d="M8.5 7.5 L12 11" stroke="#D02020" stroke-width="1" shape-rendering="auto"/></svg></div>
<div style="position:absolute;left:3px;top:100px;width:1px;height:452px;background:#fff"></div>
<div style="position:absolute;left:58px;top:100px;width:714px;height:1px;background:#fff"></div>
<div style="position:absolute;left:771px;top:100px;width:1px;height:452px;background:#ACA899"></div>
<div style="position:absolute;left:772px;top:100px;width:1px;height:452px;background:#716F64"></div>
<div style="position:absolute;left:3px;top:80px;width:55px;height:21px;background:#ECE9D8;box-shadow:inset 1px 1px 0 #fff;border-radius:2px 0 0 0"></div>
<div style="position:absolute;left:57px;top:81px;width:1px;height:20px;background:#716F64"></div>
<div style="position:absolute;left:58px;top:82px;width:1px;height:18px;background:#ACA899"></div>
<div style="position:absolute;left:603px;top:79px;width:41px;height:22px;background:#ECE9D8;box-shadow:inset 1px 1px 0 #fff, inset -1px -1px 0 #716F64, inset -2px -2px 0 #ACA899;"></div>
<div style="position:absolute;left:645px;top:79px;width:41px;height:22px;background:#ECE9D8;box-shadow:inset 1px 1px 0 #fff, inset -1px -1px 0 #716F64, inset -2px -2px 0 #ACA899;"></div>
<div style="position:absolute;left:687px;top:79px;width:41px;height:22px;background:#ECE9D8;box-shadow:inset 1px 1px 0 #fff, inset -1px -1px 0 #716F64, inset -2px -2px 0 #ACA899;"></div>
<div style="position:absolute;left:729px;top:79px;width:41px;height:22px;background:#ECE9D8;box-shadow:inset 1px 1px 0 #fff, inset -1px -1px 0 #716F64, inset -2px -2px 0 #ACA899;"></div>
<svg style="position:absolute;left:619px;top:87px" width="10" height="7" shape-rendering="crispEdges"><rect x="0" y="0" width="2" height="7"/><path d="M2 3.5 L9 0 V7Z"/></svg>
<svg style="position:absolute;left:662px;top:87px" width="9" height="7"><path d="M0 3.5 L8 0 V7Z"/></svg>
<svg style="position:absolute;left:704px;top:87px" width="9" height="7"><path d="M8 3.5 L0 0 V7Z"/></svg>
<svg style="position:absolute;left:745px;top:87px" width="11" height="7" shape-rendering="crispEdges"><path d="M7 3.5 L0 0 V7Z"/><rect x="8" y="0" width="2" height="7"/></svg>
<div style="position:absolute;left:14px;top:108px;width:747px;height:198px;border:1px solid #FFFCF0;box-sizing:border-box;"></div>
<div style="position:absolute;left:15px;top:109px;width:745px;height:196px;border:1px solid #000;box-sizing:border-box;"></div>
<div style="position:absolute;left:16px;top:110px;width:743px;height:194px;border:1px solid #FFFCF0;border-right:none;border-bottom:none;box-sizing:border-box;"></div>
<div style="position:absolute;left:30.11px;top:117px;width:64.89px;height:20px;overflow:hidden"><div style="position:absolute;left:0;top:0;white-space:nowrap;font-size:12px;line-height:20px;font-weight:normal;color:#000;transform:scaleX(0.8900);transform-origin:0 0;">FORM-5 NO2</div></div>
<div class="inp" style="left:95px;top:114px;width:113px;height:19px;"></div>
<div class="inp" style="left:95px;top:134px;width:217px;height:19px;"></div>
<div class="inp" style="left:95px;top:154px;width:217px;height:19px;"></div>
<div class="inp" style="left:95px;top:174px;width:217px;height:19px;"></div>
<div class="inp" style="left:95px;top:194px;width:73px;height:19px;"></div>
<div class="inp" style="left:95px;top:214px;width:121px;height:19px;"></div>
<div style="position:absolute;left:215px;top:111px;width:24px;height:23px;background:#ECE9D8;box-shadow:inset 1px 1px 0 #fff, inset -1px -1px 0 #ACA899;"><svg style="position:absolute;left:0px;top:0px" width="24" height="24" viewBox="0 0 24 24" shape-rendering="crispEdges"><path d="M11 4h1v1h-1zM11 5h1v1h-1zM6 6h1v1h-1zM10 6h3v1h-3zM16 6h1v1h-1zM8 7h7v1h-7zM8 8h2v1h-2zM14 8h2v1h-2zM7 9h2v1h-2zM15 9h2v1h-2zM7 10h1v1h-1zM16 10h1v1h-1zM4 11h4v1h-4zM16 11h4v1h-4zM7 12h1v1h-1zM16 12h1v1h-1zM7 13h2v1h-2zM15 13h2v1h-2zM8 14h2v1h-2zM12 14h1v1h-1zM15 14h1v1h-1zM6 15h1v1h-1zM9 15h1v1h-1zM14 15h1v1h-1zM17 15h1v1h-1z" fill="#FFFF00"/><path d="M10 8h4v1h-4zM9 9h1v1h-1zM14 9h1v1h-1zM8 10h1v1h-1zM15 10h1v1h-1zM8 11h1v1h-1zM15 11h1v1h-1zM8 12h1v1h-1zM15 12h1v1h-1zM9 13h1v1h-1zM14 13h1v1h-1zM10 14h1v1h-1zM14 14h1v1h-1zM10 15h4v1h-4zM10 16h1v1h-1zM13 16h1v1h-1zM10 17h4v1h-4zM10 18h1v1h-1zM13 18h1v1h-1zM11 19h2v1h-2z" fill="#000"/><path d="M10 9h4v1h-4zM9 10h3v1h-3zM13 10h2v1h-2zM9 11h3v1h-3zM13 11h2v1h-2zM9 12h3v1h-3zM13 12h2v1h-2zM10 13h2v1h-2zM13 13h1v1h-1zM11 14h1v1h-1zM13 14h1v1h-1zM11 16h2v1h-2zM11 18h1v1h-1z" fill="#fff"/><path d="M12 10h1v1h-1zM12 11h1v1h-1zM12 12h1v1h-1zM12 13h1v1h-1zM12 18h1v1h-1z" fill="#808080"/></svg></div>
<div style="position:absolute;left:239px;top:111px;width:24px;height:23px;background:#ECE9D8;box-shadow:inset 1px 1px 0 #fff, inset -1px -1px 0 #ACA899;"><svg style="position:absolute;left:0px;top:0px" width="24" height="24" viewBox="0 0 24 24" shape-rendering="crispEdges"><path d="M6 4h4v1h-4zM17 4h1v1h-1zM5 5h6v1h-6zM16 5h1v1h-1zM18 5h1v1h-1zM4 6h6v1h-6zM11 6h1v1h-1zM16 6h1v1h-1zM18 6h1v1h-1zM4 7h5v1h-5zM12 7h5v1h-5zM18 7h1v1h-1zM5 8h3v1h-3zM12 8h1v1h-1zM15 8h2v1h-2zM18 8h1v1h-1zM6 9h1v1h-1zM11 9h1v1h-1zM15 9h1v1h-1zM17 9h2v1h-2zM7 10h1v1h-1zM10 10h1v1h-1zM15 10h1v1h-1zM18 10h1v1h-1zM8 11h2v1h-2zM14 11h2v1h-2zM18 11h1v1h-1zM9 12h1v1h-1zM14 12h1v1h-1zM16 12h1v1h-1zM18 12h1v1h-1zM9 13h1v1h-1zM12 13h1v1h-1zM15 13h1v1h-1zM18 13h1v1h-1zM10 14h1v1h-1zM13 14h1v1h-1zM15 14h1v1h-1zM17 14h2v1h-2zM11 15h1v1h-1zM14 15h1v1h-1zM16 15h2v1h-2zM12 16h4v1h-4zM17 16h1v1h-1zM17 17h1v1h-1zM18 18h1v1h-1z" fill="#000"/><path d="M17 5h1v1h-1zM13 9h1v1h-1zM12 10h1v1h-1zM14 10h1v1h-1zM10 11h1v1h-1zM12 11h1v1h-1zM11 12h1v1h-1zM13 12h1v1h-1zM15 12h1v1h-1zM10 13h1v1h-1zM13 13h1v1h-1zM16 13h1v1h-1zM11 14h1v1h-1zM14 14h1v1h-1zM13 15h1v1h-1z" fill="#fff"/><path d="M10 6h1v1h-1zM9 7h3v1h-3zM8 8h4v1h-4zM7 9h4v1h-4zM8 10h2v1h-2z" fill="#00FFFF"/><path d="M17 6h1v1h-1zM17 7h1v1h-1zM13 8h2v1h-2zM17 8h1v1h-1zM12 9h1v1h-1zM14 9h1v1h-1zM16 9h1v1h-1zM11 10h1v1h-1zM13 10h1v1h-1zM16 10h2v1h-2zM11 11h1v1h-1zM13 11h1v1h-1zM16 11h2v1h-2zM10 12h1v1h-1zM12 12h1v1h-1zM17 12h1v1h-1zM11 13h1v1h-1zM14 13h1v1h-1zM17 13h1v1h-1zM12 14h1v1h-1zM16 14h1v1h-1zM12 15h1v1h-1zM15 15h1v1h-1zM16 16h1v1h-1zM16 17h1v1h-1z" fill="#FFFF00"/><path d="M5 18h7v1h-7zM13 18h1v1h-1zM20 18h1v1h-1z" fill="#808080"/><path d="M16 18h2v1h-2z" fill="#FF0000"/></svg></div>
<div style="position:absolute;left:263px;top:111px;width:24px;height:23px;background:#ECE9D8;box-shadow:inset 1px 1px 0 #fff, inset -1px -1px 0 #ACA899;"><svg style="position:absolute;left:0px;top:0px" width="24" height="24" viewBox="0 0 24 24" shape-rendering="crispEdges"><path d="M7 4h1v1h-1zM11 4h7v1h-7zM7 5h1v1h-1zM9 5h1v1h-1zM11 5h1v1h-1zM17 5h2v1h-2zM8 6h1v1h-1zM10 6h2v1h-2zM18 6h2v1h-2zM9 7h1v1h-1zM11 7h1v1h-1zM14 7h2v1h-2zM20 7h1v1h-1zM10 8h1v1h-1zM12 8h1v1h-1zM20 8h1v1h-1zM10 9h2v1h-2zM13 9h1v1h-1zM20 9h1v1h-1zM5 10h5v1h-5zM11 10h2v1h-2zM14 10h1v1h-1zM16 10h2v1h-2zM20 10h1v1h-1zM5 11h1v1h-1zM7 11h1v1h-1zM12 11h2v1h-2zM15 11h1v1h-1zM20 11h1v1h-1zM5 12h1v1h-1zM16 12h1v1h-1zM20 12h1v1h-1zM5 13h1v1h-1zM11 13h5v1h-5zM17 13h1v1h-1zM20 13h1v1h-1zM5 14h1v1h-1zM14 14h1v1h-1zM17 14h2v1h-2zM20 14h1v1h-1zM5 15h1v1h-1zM10 15h4v1h-4zM18 15h1v1h-1zM20 15h1v1h-1zM5 16h1v1h-1zM13 16h1v1h-1zM15 16h2v1h-2zM18 16h1v1h-1zM20 16h1v1h-1zM5 17h8v1h-8zM20 17h1v1h-1zM11 18h1v1h-1zM20 18h1v1h-1zM11 19h10v1h-10z" fill="#000"/><path d="M8 5h1v1h-1z" fill="#FF0000"/><path d="M12 5h5v1h-5zM12 6h6v1h-6zM12 7h2v1h-2zM16 7h4v1h-4zM13 8h7v1h-7zM14 9h6v1h-6zM15 10h1v1h-1zM18 10h2v1h-2zM9 11h1v1h-1zM11 11h1v1h-1zM16 11h4v1h-4zM8 12h1v1h-1zM10 12h1v1h-1zM17 12h3v1h-3zM7 13h1v1h-1zM9 13h1v1h-1zM18 13h2v1h-2zM8 14h1v1h-1zM10 14h1v1h-1zM15 14h2v1h-2zM19 14h1v1h-1zM7 15h1v1h-1zM9 15h1v1h-1zM14 15h4v1h-4zM19 15h1v1h-1zM8 16h1v1h-1zM10 16h1v1h-1zM14 16h1v1h-1zM17 16h1v1h-1zM19 16h1v1h-1zM13 17h7v1h-7zM12 18h8v1h-8z" fill="#fff"/><path d="M9 6h1v1h-1zM10 7h1v1h-1zM11 8h1v1h-1zM12 9h1v1h-1zM10 10h1v1h-1zM13 10h1v1h-1zM8 11h1v1h-1zM10 11h1v1h-1zM14 11h1v1h-1zM7 12h1v1h-1zM9 12h1v1h-1zM11 12h5v1h-5zM8 13h1v1h-1zM10 13h1v1h-1zM16 13h1v1h-1zM7 14h1v1h-1zM9 14h1v1h-1zM11 14h3v1h-3zM8 15h1v1h-1zM7 16h1v1h-1zM9 16h1v1h-1zM11 16h2v1h-2z" fill="#FFFF00"/><path d="M6 11h1v1h-1zM6 12h1v1h-1zM6 13h1v1h-1zM6 14h1v1h-1zM6 15h1v1h-1zM6 16h1v1h-1z" fill="#00FFFF"/></svg></div>
<div class="inp" style="left:399px;top:114px;width:129px;height:19px;"></div>
<div class="inp" style="left:399px;top:134px;width:129px;height:19px;"></div>
<div class="inp" style="left:399px;top:154px;width:193px;height:19px;"></div>
<div class="inp" style="left:399px;top:174px;width:129px;height:19px;"></div>
<div class="inp" style="left:399px;top:194px;width:129px;height:19px;"></div>
<div class="inp" style="left:399px;top:214px;width:129px;height:19px;"></div>
<div style="position:absolute;left:654px;top:122px;width:96px;height:105px;background:#F2EFE0"></div>
<div style="position:absolute;left:655px;top:123px;width:95px;height:104px;background:#fff"></div>
<div style="position:absolute;left:655px;top:123px;width:94px;height:103px;background:#A8A490"></div>
<div style="position:absolute;left:656px;top:124px;width:93px;height:102px;background:#BDB49A"></div>
<div style="position:absolute;left:749px;top:124px;width:1px;height:102px;background:#F4F0E0"></div>
<svg style="position:absolute;left:657px;top:125px" width="92" height="101" viewBox="0 0 92 101">
<defs>
<filter id="bl" x="-10%" y="-10%" width="120%" height="120%"><feGaussianBlur stdDeviation="0.9"/></filter>
<pattern id="chk" width="3" height="3" patternUnits="userSpaceOnUse"><rect width="3" height="3" fill="#D6D4DE"/><rect width="1" height="3" fill="#C2BFCC"/><rect width="3" height="1" fill="#C8C6D2"/></pattern>
<linearGradient id="bg" x1="0" y1="0" x2="1" y2="1"><stop offset="0" stop-color="#3A72C0"/><stop offset="1" stop-color="#3068B6"/></linearGradient>
<linearGradient id="sk" x1="0" y1="0" x2="1" y2="0"><stop offset="0" stop-color="#B8826E"/><stop offset="0.35" stop-color="#CC9A86"/><stop offset="0.7" stop-color="#CA9884"/><stop offset="1" stop-color="#B27C6A"/></linearGradient>
</defs>
<rect width="92" height="101" fill="url(#bg)"/>
<g filter="url(#bl)">
<path d="M0 101 L0 91 Q10 83 24 78 L30 72 L62 72 L68 78 Q84 81 92 84 L92 101Z" fill="url(#chk)"/>
<path d="M34 58 L59 58 L61 74 L46 84 L32 74Z" fill="#B6806C"/>
<path d="M28 71 L46 88 L38 96 L30 84Z" fill="#E4E2EA"/><path d="M64 71 L46 88 L55 96 L64 84Z" fill="#DEDCE4"/>
<path d="M41 82 L46 79 L51 82 L50 90 L51 101 L41 101 L42 90Z" fill="#2E2C2E"/>
<path d="M43 86 h2 v2 h-2z M47 90 h2 v2 h-2z M44 94 h2 v2 h-2z M47 97 h2 v2 h-2z" fill="#8A8888"/>
<ellipse cx="23" cy="42" rx="3.5" ry="6" fill="#BE8874"/><ellipse cx="71" cy="43" rx="3.5" ry="6" fill="#BA8472"/>
<path d="M25 28 Q26 21 46 21 Q68 21 69 30 L69 48 Q67 64 47 67 Q30 65 27 50Z" fill="url(#sk)"/>
<path d="M21 40 Q18 26 24 15 Q32 6 46 5 Q62 5 70 13 Q76 22 75 40 L71 39 Q70 31 65 27 Q56 22 45 22 Q33 24 28 30 L26 42Z" fill="#2A1F1E"/><path d="M28 30 Q34 24 45 23 Q40 27 36 26 Q31 28 28 33Z" fill="#3A2A26"/>
<path d="M31 35 Q36 33 42 35" stroke="#4A3028" stroke-width="2" fill="none"/><path d="M51 35 Q57 33 62 35" stroke="#4A3028" stroke-width="2" fill="none"/>
<ellipse cx="37" cy="39" rx="4" ry="1.5" fill="#5A3A34"/><ellipse cx="56" cy="39" rx="4" ry="1.5" fill="#5A3A34"/>
<path d="M45 40 L42 52 L50 52 L47 40Z" fill="#D6A290"/>
<path d="M42 53 L50 53" stroke="#9A6656" stroke-width="1.5"/>
<path d="M38 57 Q45 56 53 57" stroke="#8C5A50" stroke-width="2" fill="none"/>
</g>
</svg>

<div class="inp" style="left:95px;top:236px;width:657px;height:19px;"></div>
<div class="inp" style="left:95px;top:256px;width:657px;height:19px;"></div>
<div class="inp" style="left:95px;top:276px;width:657px;height:19px;"></div>
<svg style="position:absolute;left:110px;top:241px" width="6" height="10"><path d="M5 0.5 L1 9.5" stroke="#FF0000" stroke-width="1.2"/></svg>
<div style="position:absolute;left:15px;top:313px;width:744px;height:240px;border:1px solid #ACA899;border-bottom:none;box-sizing:border-box;box-shadow:inset 1px 1px 0 #fff, 1px 0 0 #fff;"></div>
<div style="position:absolute;left:21px;top:308px;width:33px;height:12px;background:#ECE9D8"></div>
<div style="position:absolute;left:23px;top:322px;width:730px;height:227px;background:#fff;box-shadow:inset 1px 1px 0 #ACA899, inset 2px 2px 0 #716F64, inset -1px -1px 0 #fff, inset -2px -2px 0 #F1EFE2;"></div>
<div style="position:absolute;left:25px;top:324px;width:709px;height:18px;background:#ECE9D8"></div>
<div style="position:absolute;left:25px;top:324px;width:12px;height:18px;box-shadow:inset 1px 1px 0 #fff, inset -1px 0 0 #000;"></div>
<div style="position:absolute;left:37px;top:324px;width:17px;height:18px;box-shadow:inset 1px 1px 0 #fff, inset -1px 0 0 #000;"></div>
<div style="position:absolute;left:54px;top:324px;width:17px;height:18px;box-shadow:inset 1px 1px 0 #fff, inset -1px 0 0 #000;"></div>
<div style="position:absolute;left:71px;top:324px;width:95px;height:18px;box-shadow:inset 1px 1px 0 #fff, inset -1px 0 0 #000;"></div>
<div style="position:absolute;left:166px;top:324px;width:77px;height:18px;box-shadow:inset 1px 1px 0 #fff, inset -1px 0 0 #000;"></div>
<div style="position:absolute;left:243px;top:324px;width:155px;height:18px;box-shadow:inset 1px 1px 0 #fff, inset -1px 0 0 #000;"></div>
<div style="position:absolute;left:398px;top:324px;width:124px;height:18px;box-shadow:inset 1px 1px 0 #fff, inset -1px 0 0 #000;"></div>
<div style="position:absolute;left:522px;top:324px;width:155px;height:18px;box-shadow:inset 1px 1px 0 #fff, inset -1px 0 0 #000;"></div>
<div style="position:absolute;left:677px;top:324px;width:57px;height:18px;box-shadow:inset 1px 1px 0 #fff;"></div>
<div style="position:absolute;left:25px;top:342px;width:709px;height:1px;background:#000"></div>
<div style="position:absolute;left:25px;top:343px;width:11px;height:18px;background:#ECE9D8;box-shadow:inset 1px 1px 0 #fff, inset -1px -1px 0 #ACA899;"></div>
<div style="position:absolute;left:25px;top:361px;width:12px;height:1px;background:#000"></div>
<div style="position:absolute;left:36px;top:343px;width:1px;height:19px;background:#000"></div>
<div style="position:absolute;left:37px;top:361px;width:697px;height:1px;background:#C0C0C0"></div>
<div style="position:absolute;left:53px;top:343px;width:1px;height:19px;background:#C0C0C0"></div>
<div style="position:absolute;left:70px;top:343px;width:1px;height:19px;background:#C0C0C0"></div>
<div style="position:absolute;left:165px;top:343px;width:1px;height:19px;background:#C0C0C0"></div>
<div style="position:absolute;left:242px;top:343px;width:1px;height:19px;background:#C0C0C0"></div>
<div style="position:absolute;left:397px;top:343px;width:1px;height:19px;background:#C0C0C0"></div>
<div style="position:absolute;left:521px;top:343px;width:1px;height:19px;background:#C0C0C0"></div>
<div style="position:absolute;left:676px;top:343px;width:1px;height:19px;background:#C0C0C0"></div>
<div style="position:absolute;left:71px;top:343px;width:663px;height:18px;background:#316AC5"></div>
<div style="position:absolute;left:165px;top:343px;width:1px;height:18px;background:#C0C0C0"></div>
<div style="position:absolute;left:242px;top:343px;width:1px;height:18px;background:#C0C0C0"></div>
<div style="position:absolute;left:397px;top:343px;width:1px;height:18px;background:#C0C0C0"></div>
<div style="position:absolute;left:521px;top:343px;width:1px;height:18px;background:#C0C0C0"></div>
<div style="position:absolute;left:676px;top:343px;width:1px;height:18px;background:#C0C0C0"></div>
<svg style="position:absolute;left:28px;top:346px" width="8" height="12"><path d="M0 1 L6 6 L0 11Z"/></svg>
<div style="position:absolute;left:39px;top:345px;width:12px;height:14px;border:2px solid #000;box-sizing:border-box;background:#fff"></div>
<div style="position:absolute;left:56px;top:345px;width:12px;height:14px;border:2px solid #000;box-sizing:border-box;background:#fff"></div>
<div style="position:absolute;left:25px;top:362px;width:11px;height:18px;background:#ECE9D8;box-shadow:inset 1px 1px 0 #fff, inset -1px -1px 0 #ACA899;"></div>
<div style="position:absolute;left:25px;top:380px;width:12px;height:1px;background:#000"></div>
<div style="position:absolute;left:36px;top:362px;width:1px;height:19px;background:#000"></div>
<div style="position:absolute;left:37px;top:380px;width:697px;height:1px;background:#C0C0C0"></div>
<div style="position:absolute;left:53px;top:362px;width:1px;height:19px;background:#C0C0C0"></div>
<div style="position:absolute;left:70px;top:362px;width:1px;height:19px;background:#C0C0C0"></div>
<div style="position:absolute;left:165px;top:362px;width:1px;height:19px;background:#C0C0C0"></div>
<div style="position:absolute;left:242px;top:362px;width:1px;height:19px;background:#C0C0C0"></div>
<div style="position:absolute;left:397px;top:362px;width:1px;height:19px;background:#C0C0C0"></div>
<div style="position:absolute;left:521px;top:362px;width:1px;height:19px;background:#C0C0C0"></div>
<div style="position:absolute;left:676px;top:362px;width:1px;height:19px;background:#C0C0C0"></div>
<div style="position:absolute;left:39px;top:364px;width:12px;height:14px;border:2px solid #000;box-sizing:border-box;background:#fff"></div>
<div style="position:absolute;left:56px;top:364px;width:12px;height:14px;border:2px solid #000;box-sizing:border-box;background:#fff"></div>
<div style="position:absolute;left:25px;top:381px;width:11px;height:18px;background:#ECE9D8;box-shadow:inset 1px 1px 0 #fff, inset -1px -1px 0 #ACA899;"></div>
<div style="position:absolute;left:25px;top:399px;width:12px;height:1px;background:#000"></div>
<div style="position:absolute;left:36px;top:381px;width:1px;height:19px;background:#000"></div>
<div style="position:absolute;left:37px;top:399px;width:697px;height:1px;background:#C0C0C0"></div>
<div style="position:absolute;left:53px;top:381px;width:1px;height:19px;background:#C0C0C0"></div>
<div style="position:absolute;left:70px;top:381px;width:1px;height:19px;background:#C0C0C0"></div>
<div style="position:absolute;left:165px;top:381px;width:1px;height:19px;background:#C0C0C0"></div>
<div style="position:absolute;left:242px;top:381px;width:1px;height:19px;background:#C0C0C0"></div>
<div style="position:absolute;left:397px;top:381px;width:1px;height:19px;background:#C0C0C0"></div>
<div style="position:absolute;left:521px;top:381px;width:1px;height:19px;background:#C0C0C0"></div>
<div style="position:absolute;left:676px;top:381px;width:1px;height:19px;background:#C0C0C0"></div>
<div style="position:absolute;left:39px;top:383px;width:12px;height:14px;border:2px solid #000;box-sizing:border-box;background:#fff"></div>
<div style="position:absolute;left:56px;top:383px;width:12px;height:14px;border:2px solid #000;box-sizing:border-box;background:#fff"></div>
<div style="position:absolute;left:25px;top:400px;width:11px;height:18px;background:#ECE9D8;box-shadow:inset 1px 1px 0 #fff, inset -1px -1px 0 #ACA899;"></div>
<div style="position:absolute;left:25px;top:418px;width:12px;height:1px;background:#000"></div>
<div style="position:absolute;left:36px;top:400px;width:1px;height:19px;background:#000"></div>
<div style="position:absolute;left:37px;top:418px;width:697px;height:1px;background:#C0C0C0"></div>
<div style="position:absolute;left:53px;top:400px;width:1px;height:19px;background:#C0C0C0"></div>
<div style="position:absolute;left:70px;top:400px;width:1px;height:19px;background:#C0C0C0"></div>
<div style="position:absolute;left:165px;top:400px;width:1px;height:19px;background:#C0C0C0"></div>
<div style="position:absolute;left:242px;top:400px;width:1px;height:19px;background:#C0C0C0"></div>
<div style="position:absolute;left:397px;top:400px;width:1px;height:19px;background:#C0C0C0"></div>
<div style="position:absolute;left:521px;top:400px;width:1px;height:19px;background:#C0C0C0"></div>
<div style="position:absolute;left:676px;top:400px;width:1px;height:19px;background:#C0C0C0"></div>
<div style="position:absolute;left:39px;top:402px;width:12px;height:14px;border:2px solid #000;box-sizing:border-box;background:#fff"></div>
<div style="position:absolute;left:56px;top:402px;width:12px;height:14px;border:2px solid #000;box-sizing:border-box;background:#fff"></div>
<div style="position:absolute;left:734px;top:324px;width:17px;height:208px;background:linear-gradient(90deg,#EEEDE5,#FDFDFA)"></div>
<div style="position:absolute;left:735px;top:325px;width:15px;height:15px;border-radius:2px;background:linear-gradient(135deg,#DCE7FD,#B9CEF8);box-shadow:inset 0 0 0 1px #C3D3FD, 0 1px 0 #fff;"></div>
<svg style="position:absolute;left:735px;top:325px" width="15" height="15"><path d="M4 9 L7.5 5.5 L11 9" stroke="#4D6185" stroke-width="2" fill="none"/></svg>
<div style="position:absolute;left:735px;top:341px;width:15px;height:98px;border-radius:2px;background:linear-gradient(90deg,#CADAFC,#BCD0FA);box-shadow:inset 0 0 0 1px #B5C9F5;"></div>
<svg style="position:absolute;left:738px;top:387px" width="9" height="8"><path d="M1 0.5h7M1 2.5h7M1 4.5h7M1 6.5h7" stroke="#8EABE8"/></svg>
<div style="position:absolute;left:735px;top:515px;width:15px;height:15px;border-radius:2px;background:linear-gradient(135deg,#DCE7FD,#B9CEF8);box-shadow:inset 0 0 0 1px #C3D3FD, 0 1px 0 #fff;"></div>
<svg style="position:absolute;left:735px;top:515px" width="15" height="15"><path d="M4 6 L7.5 9.5 L11 6" stroke="#4D6185" stroke-width="2" fill="none"/></svg>
<div style="position:absolute;left:25px;top:532px;width:709px;height:16px;background:linear-gradient(#EEEDE5,#FDFDFA)"></div>
<div style="position:absolute;left:26px;top:533px;width:15px;height:15px;border-radius:2px;background:linear-gradient(135deg,#DCE7FD,#B9CEF8);box-shadow:inset 0 0 0 1px #C3D3FD, 0 1px 0 #fff;"></div>
<svg style="position:absolute;left:26px;top:533px" width="15" height="15"><path d="M9 4 L5.5 7.5 L9 11" stroke="#4D6185" stroke-width="2" fill="none"/></svg>
<div style="position:absolute;left:43px;top:533px;width:16px;height:15px;border-radius:2px;background:linear-gradient(#CADAFC,#BCD0FA);box-shadow:inset 0 0 0 1px #B5C9F5;"></div>
<svg style="position:absolute;left:47px;top:536px" width="9" height="9"><path d="M1.5 1v7M3.5 1v7M5.5 1v7M7.5 1v7" stroke="#8EABE8"/></svg>
<div style="position:absolute;left:718px;top:533px;width:15px;height:15px;border-radius:2px;background:linear-gradient(135deg,#DCE7FD,#B9CEF8);box-shadow:inset 0 0 0 1px #C3D3FD, 0 1px 0 #fff;"></div>
<svg style="position:absolute;left:718px;top:533px" width="15" height="15"><path d="M6 4 L9.5 7.5 L6 11" stroke="#4D6185" stroke-width="2" fill="none"/></svg>
<div style="position:absolute;left:734px;top:532px;width:17px;height:16px;background:#ECE9D8"></div>
<div style="position:absolute;left:3px;top:552px;width:773px;height:2px;background:#000"></div>
<div style="position:absolute;left:3px;top:554px;width:773px;height:17px;background:#ECE9D8;box-shadow:inset 0 1px 0 #fff, inset -1px -1px 0 #fff"></div>
<div style="position:absolute;left:85px;top:552px;width:2px;height:19px;background:#000"></div>
<div style="position:absolute;left:87px;top:554px;width:1px;height:17px;background:#fff"></div>
<div style="position:absolute;left:175px;top:552px;width:2px;height:19px;background:#000"></div>
<div style="position:absolute;left:177px;top:554px;width:1px;height:17px;background:#fff"></div>
<div style="position:absolute;left:257px;top:552px;width:2px;height:19px;background:#000"></div>
<div style="position:absolute;left:259px;top:554px;width:1px;height:17px;background:#fff"></div>
<div style="position:absolute;left:350px;top:552px;width:2px;height:19px;background:#000"></div>
<div style="position:absolute;left:352px;top:554px;width:1px;height:17px;background:#fff"></div>
<div style="position:absolute;left:434px;top:552px;width:2px;height:19px;background:#000"></div>
<div style="position:absolute;left:436px;top:554px;width:1px;height:17px;background:#fff"></div>
<div style="position:absolute;left:525px;top:552px;width:2px;height:19px;background:#000"></div>
<div style="position:absolute;left:527px;top:554px;width:1px;height:17px;background:#fff"></div>
<div style="position:absolute;left:632px;top:552px;width:2px;height:19px;background:#000"></div>
<div style="position:absolute;left:634px;top:554px;width:1px;height:17px;background:#fff"></div>
<div style="position:absolute;left:744px;top:552px;width:2px;height:19px;background:#000"></div>
<div style="position:absolute;left:746px;top:554px;width:1px;height:17px;background:#fff"></div>
<div style="position:absolute;left:7.19px;top:6px;height:20px;"><div style="position:absolute;left:0;top:0;white-space:nowrap;font-size:14px;line-height:20px;font-weight:bold;color:#fff;transform:scaleX(0.8065);transform-origin:0 0;text-shadow:1px 1px 0 #0A1E88;-webkit-text-stroke:0.35px #fff;">ESİR</div></div>
<div style="position:absolute;left:38.00px;top:6px;height:20px;"><div style="position:absolute;left:0;top:0;white-space:nowrap;font-size:14px;line-height:20px;font-weight:bold;color:#fff;transform:scaleX(0.8704);transform-origin:0 0;text-shadow:1px 1px 0 #0A1E88;-webkit-text-stroke:0.35px #fff;">YAZILIM</div></div>
<div style="position:absolute;left:89.19px;top:6px;height:20px;"><div style="position:absolute;left:0;top:0;white-space:nowrap;font-size:14px;line-height:20px;font-weight:bold;color:#fff;transform:scaleX(0.8125);transform-origin:0 0;text-shadow:1px 1px 0 #0A1E88;-webkit-text-stroke:0.35px #fff;">MAHALLESİ</div></div>
<div style="position:absolute;left:160.11px;top:6px;height:20px;"><div style="position:absolute;left:0;top:0;white-space:nowrap;font-size:14px;line-height:20px;font-weight:bold;color:#fff;transform:scaleX(0.8941);transform-origin:0 0;text-shadow:1px 1px 0 #0A1E88;-webkit-text-stroke:0.35px #fff;">MUHTARLIĞI</div></div>
<div style="position:absolute;left:243.00px;top:6px;height:20px;"><div style="position:absolute;left:0;top:0;white-space:nowrap;font-size:14px;line-height:20px;font-weight:bold;color:#fff;text-shadow:1px 1px 0 #0A1E88;-webkit-text-stroke:0.35px #fff;">-</div></div>
<div style="position:absolute;left:249.07px;top:6px;height:20px;"><div style="position:absolute;left:0;top:0;white-space:nowrap;font-size:14px;line-height:20px;font-weight:bold;color:#fff;transform:scaleX(0.9302);transform-origin:0 0;text-shadow:1px 1px 0 #0A1E88;-webkit-text-stroke:0.35px #fff;">Sürüm</div></div>
<div style="position:absolute;left:292.91px;top:6px;height:20px;"><div style="position:absolute;left:0;top:0;white-space:nowrap;font-size:14px;line-height:20px;font-weight:bold;color:#fff;transform:scaleX(1.0877);transform-origin:0 0;text-shadow:1px 1px 0 #0A1E88;-webkit-text-stroke:0.35px #fff;">5.0.23.36</div></div>
<div style="position:absolute;left:11.11px;top:80px;height:20px;"><div style="position:absolute;left:0;top:0;white-space:nowrap;font-size:12px;line-height:20px;font-weight:normal;color:#000;transform:scaleX(0.8889);transform-origin:0 0;">FORM-5</div></div>
<div style="position:absolute;left:53.15px;top:137px;height:20px;"><div style="position:absolute;left:0;top:0;white-space:nowrap;font-size:12px;line-height:20px;font-weight:normal;color:#000;transform:scaleX(0.8537);transform-origin:0 0;">CADDE</div></div>
<div style="position:absolute;left:54.12px;top:157px;height:20px;"><div style="position:absolute;left:0;top:0;white-space:nowrap;font-size:12px;line-height:20px;font-weight:normal;color:#000;transform:scaleX(0.8750);transform-origin:0 0;">SOKAK</div></div>
<div style="position:absolute;left:44.06px;top:177px;height:20px;"><div style="position:absolute;left:0;top:0;white-space:nowrap;font-size:12px;line-height:20px;font-weight:normal;color:#000;transform:scaleX(0.9375);transform-origin:0 0;">BİNA ADI</div></div>
<div style="position:absolute;left:47.11px;top:197px;height:20px;"><div style="position:absolute;left:0;top:0;white-space:nowrap;font-size:12px;line-height:20px;font-weight:normal;color:#000;transform:scaleX(0.8936);transform-origin:0 0;">BİNA NO</div></div>
<div style="position:absolute;left:38.11px;top:217px;height:20px;"><div style="position:absolute;left:0;top:0;white-space:nowrap;font-size:12px;line-height:20px;font-weight:normal;color:#000;transform:scaleX(0.8947);transform-origin:0 0;">DAİRE NO</div></div>
<div style="position:absolute;left:344.08px;top:117px;height:20px;"><div style="position:absolute;left:0;top:0;white-space:nowrap;font-size:12px;line-height:20px;font-weight:normal;color:#000;transform:scaleX(0.9216);transform-origin:0 0;">BİNA TİPİ</div></div>
<div style="position:absolute;left:344.10px;top:137px;height:20px;"><div style="position:absolute;left:0;top:0;white-space:nowrap;font-size:12px;line-height:20px;font-weight:normal;color:#000;transform:scaleX(0.9038);transform-origin:0 0;">KONUMU</div></div>
<div style="position:absolute;left:318.10px;top:157px;height:20px;"><div style="position:absolute;left:0;top:0;white-space:nowrap;font-size:12px;line-height:20px;font-weight:normal;color:#000;transform:scaleX(0.9012);transform-origin:0 0;">EV TELEFONU</div></div>
<div style="position:absolute;left:359.06px;top:177px;height:20px;"><div style="position:absolute;left:0;top:0;white-space:nowrap;font-size:12px;line-height:20px;font-weight:normal;color:#FF0000;transform:scaleX(0.9412);transform-origin:0 0;">UYARI</div></div>
<div style="position:absolute;left:343.08px;top:197px;height:20px;"><div style="position:absolute;left:0;top:0;white-space:nowrap;font-size:12px;line-height:20px;font-weight:normal;color:#0000FF;transform:scaleX(0.9231);transform-origin:0 0;">DURUMU</div></div>
<div style="position:absolute;left:353.00px;top:217px;height:20px;"><div style="position:absolute;left:0;top:0;white-space:nowrap;font-size:12px;line-height:20px;font-weight:normal;color:#008080;transform:scaleX(0.8889);transform-origin:0 0;">ÖZEL(1)</div></div>
<div style="position:absolute;left:26.00px;top:239px;height:20px;"><div style="position:absolute;left:0;top:0;white-space:nowrap;font-size:12px;line-height:20px;font-weight:normal;color:#FF0000;transform:scaleX(0.9014);transform-origin:0 0;">TÜİK ADRES</div></div>
<div style="position:absolute;left:22.09px;top:259px;height:20px;"><div style="position:absolute;left:0;top:0;white-space:nowrap;font-size:12px;line-height:20px;font-weight:normal;color:#0000FF;transform:scaleX(0.9091);transform-origin:0 0;">NAKİL ADRES</div></div>
<div style="position:absolute;left:22.10px;top:279px;height:20px;"><div style="position:absolute;left:0;top:0;white-space:nowrap;font-size:12px;line-height:20px;font-weight:normal;color:#000;transform:scaleX(0.8974);transform-origin:0 0;">GELİŞ ADRES</div></div>
<div style="position:absolute;left:97.97px;top:114px;height:20px;"><div style="position:absolute;left:0;top:0;white-space:nowrap;font-size:12px;line-height:20px;font-weight:bold;color:#000;transform:scaleX(1.0312);transform-origin:0 0;">13521</div></div>
<div style="position:absolute;left:99.00px;top:154px;height:20px;"><div style="position:absolute;left:0;top:0;white-space:nowrap;font-size:12px;line-height:20px;font-weight:bold;color:#000;transform:scaleX(0.9759);transform-origin:0 0;">ÇEVİK SOKAK</div></div>
<div style="position:absolute;left:97.83px;top:194px;height:20px;"><div style="position:absolute;left:0;top:0;white-space:nowrap;font-size:12px;line-height:20px;font-weight:bold;color:#000;transform:scaleX(1.1667);transform-origin:0 0;">112</div></div>
<div style="position:absolute;left:98.00px;top:214px;height:20px;"><div style="position:absolute;left:0;top:0;white-space:nowrap;font-size:12px;line-height:20px;font-weight:bold;color:#000;">3</div></div>
<div style="position:absolute;left:402.00px;top:114px;height:20px;"><div style="position:absolute;left:0;top:0;white-space:nowrap;font-size:12px;line-height:20px;font-weight:bold;color:#000;transform:scaleX(1.0149);transform-origin:0 0;">APARTMAN</div></div>
<div style="position:absolute;left:400.98px;top:134px;height:20px;"><div style="position:absolute;left:0;top:0;white-space:nowrap;font-size:12px;line-height:20px;font-weight:bold;color:#000;transform:scaleX(1.0250);transform-origin:0 0;">KİRACI</div></div>
<div style="position:absolute;left:402.00px;top:154px;height:20px;"><div style="position:absolute;left:0;top:0;white-space:nowrap;font-size:12px;line-height:20px;font-weight:bold;color:#000;transform:scaleX(1.0943);transform-origin:0 0;">841 32 83</div></div>
<div style="position:absolute;left:98.10px;top:276px;height:20px;"><div style="position:absolute;left:0;top:0;white-space:nowrap;font-size:12px;line-height:20px;font-weight:normal;color:#000;transform:scaleX(0.8955);transform-origin:0 0;">NAKİL - 28.12.2009 - ÇUKUR MAH. CEZAYİRLİ HASAN PAŞA SOK. BEYOĞLU İSTANBUL</div></div>
<div style="position:absolute;left:24.00px;top:305px;height:20px;"><div style="position:absolute;left:0;top:0;white-space:nowrap;font-size:12px;line-height:20px;font-weight:normal;color:#000;transform:scaleX(0.8750);transform-origin:0 0;">4 KİŞİ</div></div>
<div style="position:absolute;left:56.00px;top:323px;height:20px;"><div style="position:absolute;left:0;top:0;white-space:nowrap;font-size:11px;line-height:20px;font-weight:bold;color:#000;-webkit-text-stroke:0.3px #000;">T</div></div>
<div style="position:absolute;left:70.97px;top:323px;height:20px;"><div style="position:absolute;left:0;top:0;white-space:nowrap;font-size:11px;line-height:20px;font-weight:bold;color:#000;transform:scaleX(1.0312);transform-origin:0 0;-webkit-text-stroke:0.3px #000;">UYARI</div></div>
<div style="position:absolute;left:167.04px;top:323px;height:20px;"><div style="position:absolute;left:0;top:0;white-space:nowrap;font-size:11px;line-height:20px;font-weight:bold;color:#000;transform:scaleX(0.9574);transform-origin:0 0;-webkit-text-stroke:0.3px #000;">DURUMU</div></div>
<div style="position:absolute;left:245.00px;top:323px;height:20px;"><div style="position:absolute;left:0;top:0;white-space:nowrap;font-size:11px;line-height:20px;font-weight:bold;color:#000;transform:scaleX(0.9474);transform-origin:0 0;-webkit-text-stroke:0.3px #000;">ADI</div></div>
<div style="position:absolute;left:400.00px;top:323px;height:20px;"><div style="position:absolute;left:0;top:0;white-space:nowrap;font-size:11px;line-height:20px;font-weight:bold;color:#000;transform:scaleX(0.9756);transform-origin:0 0;-webkit-text-stroke:0.3px #000;">SOYADI</div></div>
<div style="position:absolute;left:525.00px;top:323px;height:20px;"><div style="position:absolute;left:0;top:0;white-space:nowrap;font-size:11px;line-height:20px;font-weight:bold;color:#000;transform:scaleX(0.9848);transform-origin:0 0;-webkit-text-stroke:0.3px #000;">YAKINLIĞI(*)</div></div>
<div style="position:absolute;left:679.02px;top:323px;height:20px;"><div style="position:absolute;left:0;top:0;white-space:nowrap;font-size:11px;line-height:20px;font-weight:bold;color:#000;transform:scaleX(0.9808);transform-origin:0 0;-webkit-text-stroke:0.3px #000;">BABA ADI</div></div>
<div style="position:absolute;left:244.00px;top:342px;height:20px;"><div style="position:absolute;left:0;top:0;white-space:nowrap;font-size:11px;line-height:20px;font-weight:bold;color:#fff;-webkit-text-stroke:0.3px #fff;">ERAY</div></div>
<div style="position:absolute;left:400.00px;top:342px;height:20px;"><div style="position:absolute;left:0;top:0;white-space:nowrap;font-size:11px;line-height:20px;font-weight:bold;color:#fff;transform:scaleX(0.9825);transform-origin:0 0;-webkit-text-stroke:0.3px #fff;">ALTEKİNCİ</div></div>
<div style="position:absolute;left:525.00px;top:342px;height:20px;"><div style="position:absolute;left:0;top:0;white-space:nowrap;font-size:11px;line-height:20px;font-weight:bold;color:#fff;transform:scaleX(0.9464);transform-origin:0 0;-webkit-text-stroke:0.3px #fff;">AİLE REİSİ</div></div>
<div style="position:absolute;left:679.00px;top:342px;height:20px;"><div style="position:absolute;left:0;top:0;white-space:nowrap;font-size:11px;line-height:20px;font-weight:bold;color:#fff;-webkit-text-stroke:0.3px #fff;">MECİT</div></div>
<div style="position:absolute;left:244.00px;top:361px;height:20px;"><div style="position:absolute;left:0;top:0;white-space:nowrap;font-size:11px;line-height:20px;font-weight:bold;color:#008000;-webkit-text-stroke:0.3px #008000;">LALE</div></div>
<div style="position:absolute;left:400.00px;top:361px;height:20px;"><div style="position:absolute;left:0;top:0;white-space:nowrap;font-size:11px;line-height:20px;font-weight:bold;color:#008000;transform:scaleX(0.9825);transform-origin:0 0;-webkit-text-stroke:0.3px #008000;">ALTEKİNCİ</div></div>
<div style="position:absolute;left:524.00px;top:361px;height:20px;"><div style="position:absolute;left:0;top:0;white-space:nowrap;font-size:11px;line-height:20px;font-weight:bold;color:#FF0000;-webkit-text-stroke:0.3px #FF0000;">EŞİ</div></div>
<div style="position:absolute;left:679.00px;top:361px;height:20px;"><div style="position:absolute;left:0;top:0;white-space:nowrap;font-size:11px;line-height:20px;font-weight:bold;color:#000;-webkit-text-stroke:0.3px #000;">MUHİTTİN</div></div>
<div style="position:absolute;left:244.03px;top:380px;height:20px;"><div style="position:absolute;left:0;top:0;white-space:nowrap;font-size:11px;line-height:20px;font-weight:bold;color:#008000;transform:scaleX(0.9737);transform-origin:0 0;-webkit-text-stroke:0.3px #008000;">HAKAN</div></div>
<div style="position:absolute;left:400.00px;top:380px;height:20px;"><div style="position:absolute;left:0;top:0;white-space:nowrap;font-size:11px;line-height:20px;font-weight:bold;color:#008000;transform:scaleX(0.9825);transform-origin:0 0;-webkit-text-stroke:0.3px #008000;">ALTEKİNCİ</div></div>
<div style="position:absolute;left:525.00px;top:380px;height:20px;"><div style="position:absolute;left:0;top:0;white-space:nowrap;font-size:11px;line-height:20px;font-weight:bold;color:#FF0000;transform:scaleX(0.9677);transform-origin:0 0;-webkit-text-stroke:0.3px #FF0000;">OĞLU</div></div>
<div style="position:absolute;left:680.00px;top:380px;height:20px;"><div style="position:absolute;left:0;top:0;white-space:nowrap;font-size:11px;line-height:20px;font-weight:bold;color:#000;-webkit-text-stroke:0.3px #000;">ASLAN</div></div>
<div style="position:absolute;left:244.07px;top:399px;height:20px;"><div style="position:absolute;left:0;top:0;white-space:nowrap;font-size:11px;line-height:20px;font-weight:bold;color:#008000;transform:scaleX(0.9318);transform-origin:0 0;-webkit-text-stroke:0.3px #008000;">NURTEN</div></div>
<div style="position:absolute;left:400.00px;top:399px;height:20px;"><div style="position:absolute;left:0;top:0;white-space:nowrap;font-size:11px;line-height:20px;font-weight:bold;color:#008000;transform:scaleX(0.9825);transform-origin:0 0;-webkit-text-stroke:0.3px #008000;">ALTEKİNCİ</div></div>
<div style="position:absolute;left:523.95px;top:399px;height:20px;"><div style="position:absolute;left:0;top:0;white-space:nowrap;font-size:11px;line-height:20px;font-weight:bold;color:#FF0000;transform:scaleX(1.0526);transform-origin:0 0;-webkit-text-stroke:0.3px #FF0000;">KIZI</div></div>
<div style="position:absolute;left:680.00px;top:399px;height:20px;"><div style="position:absolute;left:0;top:0;white-space:nowrap;font-size:11px;line-height:20px;font-weight:bold;color:#000;-webkit-text-stroke:0.3px #000;">ASLAN</div></div>
<div style="position:absolute;left:9.07px;top:553px;height:20px;"><div style="position:absolute;left:0;top:0;white-space:nowrap;font-size:11px;line-height:20px;font-weight:normal;color:#000;transform:scaleX(0.9315);transform-origin:0 0;">F3 BİREY ARA</div></div>
<div style="position:absolute;left:91.05px;top:553px;height:20px;"><div style="position:absolute;left:0;top:0;white-space:nowrap;font-size:11px;line-height:20px;font-weight:normal;color:#000;transform:scaleX(0.9512);transform-origin:0 0;">F4 FORM-5 ARA</div></div>
<div style="position:absolute;left:183.10px;top:553px;height:20px;"><div style="position:absolute;left:0;top:0;white-space:nowrap;font-size:11px;line-height:20px;font-weight:normal;color:#000;transform:scaleX(0.9041);transform-origin:0 0;">F5 EVRAKLAR</div></div>
<div style="position:absolute;left:263.06px;top:553px;height:20px;"><div style="position:absolute;left:0;top:0;white-space:nowrap;font-size:11px;line-height:20px;font-weight:normal;color:#000;transform:scaleX(0.9412);transform-origin:0 0;">F8 YENİ FORM-5</div></div>
<div style="position:absolute;left:357.09px;top:553px;height:20px;"><div style="position:absolute;left:0;top:0;white-space:nowrap;font-size:11px;line-height:20px;font-weight:normal;color:#000;transform:scaleX(0.9079);transform-origin:0 0;">F9 FORM-5 SİL</div></div>
<div style="position:absolute;left:440.05px;top:553px;height:20px;"><div style="position:absolute;left:0;top:0;white-space:nowrap;font-size:11px;line-height:20px;font-weight:normal;color:#000;transform:scaleX(0.9512);transform-origin:0 0;">F10 YENİ BİREY</div></div>
<div style="position:absolute;left:532.06px;top:553px;height:20px;"><div style="position:absolute;left:0;top:0;white-space:nowrap;font-size:11px;line-height:20px;font-weight:normal;color:#000;transform:scaleX(0.9381);transform-origin:0 0;">F11 FORM-5 KARTI</div></div>
<div style="position:absolute;left:638.06px;top:553px;height:20px;"><div style="position:absolute;left:0;top:0;white-space:nowrap;font-size:11px;line-height:20px;font-weight:normal;color:#000;transform:scaleX(0.9423);transform-origin:0 0;">F12 RESİM PANOSU</div></div>
</body></html>
